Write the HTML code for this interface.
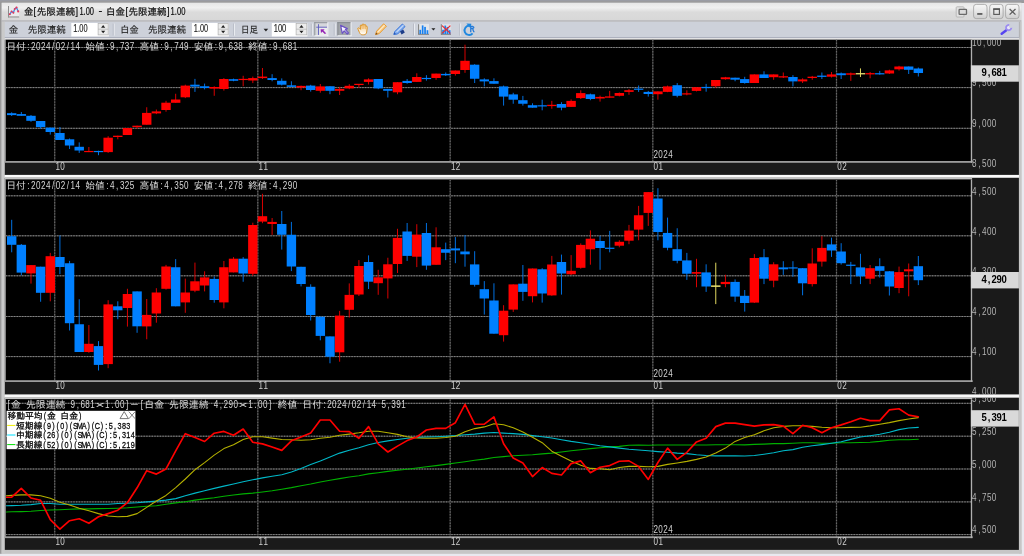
<!DOCTYPE html>
<html lang="ja"><head><meta charset="utf-8"><title>金[先限連続]1.00 - 白金[先限連続]1.00</title>
<style>html,body{margin:0;padding:0;background:#e9e9ef;overflow:hidden}body{width:1024px;height:556px}svg{will-change:transform;filter:blur(0.4px)}svg text{white-space:pre}</style></head>
<body>
<svg width="1024" height="556" viewBox="0 0 1024 556" style="display:block">
<defs>
<linearGradient id="tb" x1="0" y1="0" x2="0" y2="1"><stop offset="0" stop-color="#e6e6e6"/><stop offset="0.28" stop-color="#f0f0f0"/><stop offset="0.54" stop-color="#dbdbdb"/><stop offset="1" stop-color="#d8d8d8"/></linearGradient>
<linearGradient id="btn" x1="0" y1="0" x2="0" y2="1"><stop offset="0" stop-color="#f8f8f8"/><stop offset="0.5" stop-color="#e6e6e6"/><stop offset="1" stop-color="#cecece"/></linearGradient>
</defs>
<rect x="0.00" y="0.00" width="1024.00" height="556.00" fill="#e9e9ef"/>
<rect x="0.00" y="0.00" width="1024.00" height="1.30" fill="#9a9ca4"/>
<rect x="0.00" y="1.30" width="1024.00" height="1.50" fill="#858585"/>
<rect x="0.00" y="2.80" width="1.80" height="551.00" fill="#989898"/>
<rect x="1.80" y="2.80" width="1019.60" height="550.90" fill="#d2d2d2"/>
<rect x="1.80" y="2.80" width="1019.60" height="17.40" fill="url(#tb)"/>
<rect x="1.80" y="20.20" width="1019.60" height="1.60" fill="#b8b8bc"/>
<rect x="4.00" y="21.80" width="1015.00" height="15.20" fill="#cdd1da"/>
<rect x="4.00" y="37.00" width="1015.00" height="0.90" fill="#a2a8b6"/>
<rect x="4.00" y="37.90" width="1015.00" height="2.00" fill="#e2e2e4"/>
<rect x="1019.00" y="21.80" width="2.60" height="531.90" fill="#c6c6c6"/>
<rect x="1.80" y="549.80" width="1019.80" height="3.90" fill="#c6c6c6"/>
<rect x="1.80" y="21.80" width="3.00" height="531.90" fill="#cacaca"/>
<clipPath id="ax1"><rect x="971" y="39.8" width="48" height="135.2"/></clipPath>
<clipPath id="ax2"><rect x="971" y="177.8" width="48" height="216.8"/></clipPath>
<clipPath id="ax3"><rect x="971" y="397.7" width="48" height="152.2"/></clipPath>
<rect x="4.80" y="39.80" width="1014.10" height="135.20" fill="#1a1a1a"/>
<rect x="4.80" y="39.80" width="1.00" height="122.00" fill="#c0c0c0"/>
<rect x="5.80" y="39.80" width="965.70" height="122.00" fill="#000"/>
<g clip-path="url(#cp39)">
<clipPath id="cp39"><rect x="5.8" y="39.8" width="965.7" height="122.00000000000001"/></clipPath>
<line x1="5.80" y1="47.50" x2="971.50" y2="47.50" stroke="#464646" stroke-width="1.0"/>
<line x1="5.80" y1="47.50" x2="971.50" y2="47.50" stroke="#868686" stroke-width="1.0" stroke-dasharray="1.4 1.3"/>
<line x1="5.80" y1="87.60" x2="971.50" y2="87.60" stroke="#464646" stroke-width="1.0"/>
<line x1="5.80" y1="87.60" x2="971.50" y2="87.60" stroke="#868686" stroke-width="1.0" stroke-dasharray="1.4 1.3"/>
<line x1="5.80" y1="128.30" x2="971.50" y2="128.30" stroke="#464646" stroke-width="1.0"/>
<line x1="5.80" y1="128.30" x2="971.50" y2="128.30" stroke="#868686" stroke-width="1.0" stroke-dasharray="1.4 1.3"/>
<line x1="54.70" y1="39.80" x2="54.70" y2="161.80" stroke="#323232" stroke-width="1.2"/>
<line x1="54.70" y1="39.80" x2="54.70" y2="161.80" stroke="#666666" stroke-width="1.2" stroke-dasharray="1.4 1.4"/>
<line x1="257.80" y1="39.80" x2="257.80" y2="161.80" stroke="#323232" stroke-width="1.2"/>
<line x1="257.80" y1="39.80" x2="257.80" y2="161.80" stroke="#666666" stroke-width="1.2" stroke-dasharray="1.4 1.4"/>
<line x1="450.20" y1="39.80" x2="450.20" y2="161.80" stroke="#323232" stroke-width="1.2"/>
<line x1="450.20" y1="39.80" x2="450.20" y2="161.80" stroke="#666666" stroke-width="1.2" stroke-dasharray="1.4 1.4"/>
<line x1="652.80" y1="39.80" x2="652.80" y2="161.80" stroke="#323232" stroke-width="1.2"/>
<line x1="652.80" y1="39.80" x2="652.80" y2="161.80" stroke="#666666" stroke-width="1.2" stroke-dasharray="1.4 1.4"/>
<line x1="836.50" y1="39.80" x2="836.50" y2="161.80" stroke="#323232" stroke-width="1.2"/>
<line x1="836.50" y1="39.80" x2="836.50" y2="161.80" stroke="#666666" stroke-width="1.2" stroke-dasharray="1.4 1.4"/>
</g>
<line x1="11.70" y1="112.30" x2="11.70" y2="116.00" stroke="#0070e0" stroke-width="1.0"/>
<rect x="7.00" y="113.20" width="9.40" height="1.90" fill="#0080ff"/>
<line x1="21.34" y1="112.00" x2="21.34" y2="115.80" stroke="#0070e0" stroke-width="1.0"/>
<rect x="16.64" y="114.10" width="9.40" height="1.70" fill="#0080ff"/>
<line x1="30.99" y1="115.00" x2="30.99" y2="121.80" stroke="#0070e0" stroke-width="1.0"/>
<rect x="26.29" y="115.80" width="9.40" height="5.00" fill="#0080ff"/>
<line x1="40.63" y1="121.00" x2="40.63" y2="128.80" stroke="#0070e0" stroke-width="1.0"/>
<rect x="35.93" y="121.00" width="9.40" height="6.10" fill="#0080ff"/>
<line x1="50.28" y1="127.60" x2="50.28" y2="134.60" stroke="#0070e0" stroke-width="1.0"/>
<rect x="45.58" y="127.60" width="9.40" height="4.40" fill="#0080ff"/>
<line x1="59.92" y1="127.00" x2="59.92" y2="140.00" stroke="#0070e0" stroke-width="1.0"/>
<rect x="55.22" y="133.00" width="9.40" height="7.00" fill="#0080ff"/>
<line x1="69.57" y1="138.50" x2="69.57" y2="149.00" stroke="#0070e0" stroke-width="1.0"/>
<rect x="64.87" y="139.30" width="9.40" height="6.20" fill="#0080ff"/>
<line x1="79.22" y1="142.40" x2="79.22" y2="152.90" stroke="#0070e0" stroke-width="1.0"/>
<rect x="74.52" y="146.80" width="9.40" height="3.70" fill="#0080ff"/>
<line x1="88.86" y1="147.00" x2="88.86" y2="152.10" stroke="#d80000" stroke-width="1.0"/>
<rect x="84.16" y="150.95" width="9.40" height="1.20" fill="#ff0000"/>
<line x1="98.50" y1="150.70" x2="98.50" y2="155.20" stroke="#0070e0" stroke-width="1.0"/>
<rect x="93.80" y="150.95" width="9.40" height="1.20" fill="#0080ff"/>
<line x1="108.15" y1="136.20" x2="108.15" y2="152.90" stroke="#d80000" stroke-width="1.0"/>
<rect x="103.45" y="137.70" width="9.40" height="14.40" fill="#ff0000"/>
<line x1="117.80" y1="135.70" x2="117.80" y2="139.30" stroke="#d80000" stroke-width="1.0"/>
<rect x="113.09" y="135.70" width="9.40" height="1.30" fill="#ff0000"/>
<line x1="127.44" y1="128.00" x2="127.44" y2="135.00" stroke="#d80000" stroke-width="1.0"/>
<rect x="122.74" y="128.00" width="9.40" height="7.00" fill="#ff0000"/>
<line x1="137.08" y1="125.70" x2="137.08" y2="128.80" stroke="#d80000" stroke-width="1.0"/>
<rect x="132.38" y="125.70" width="9.40" height="1.40" fill="#ff0000"/>
<line x1="146.73" y1="107.25" x2="146.73" y2="124.75" stroke="#d80000" stroke-width="1.0"/>
<rect x="142.03" y="112.90" width="9.40" height="11.85" fill="#ff0000"/>
<line x1="156.37" y1="109.50" x2="156.37" y2="114.10" stroke="#d80000" stroke-width="1.0"/>
<rect x="151.67" y="111.40" width="9.40" height="2.00" fill="#ff0000"/>
<line x1="166.02" y1="100.80" x2="166.02" y2="111.70" stroke="#d80000" stroke-width="1.0"/>
<rect x="161.32" y="102.70" width="9.40" height="7.30" fill="#ff0000"/>
<line x1="175.66" y1="93.75" x2="175.66" y2="102.80" stroke="#d80000" stroke-width="1.0"/>
<rect x="170.97" y="99.50" width="9.40" height="3.30" fill="#ff0000"/>
<line x1="185.31" y1="84.70" x2="185.31" y2="98.10" stroke="#d80000" stroke-width="1.0"/>
<rect x="180.61" y="85.60" width="9.40" height="11.70" fill="#ff0000"/>
<line x1="194.95" y1="78.90" x2="194.95" y2="91.90" stroke="#0070e0" stroke-width="1.0"/>
<rect x="190.25" y="84.70" width="9.40" height="1.90" fill="#0080ff"/>
<line x1="204.60" y1="83.60" x2="204.60" y2="89.40" stroke="#0070e0" stroke-width="1.0"/>
<rect x="199.90" y="86.25" width="9.40" height="1.75" fill="#0080ff"/>
<line x1="214.24" y1="86.25" x2="214.24" y2="95.80" stroke="#d80000" stroke-width="1.0"/>
<rect x="209.54" y="87.00" width="9.40" height="1.60" fill="#ff0000"/>
<line x1="223.89" y1="78.10" x2="223.89" y2="90.60" stroke="#d80000" stroke-width="1.0"/>
<rect x="219.19" y="79.00" width="9.40" height="10.00" fill="#ff0000"/>
<line x1="233.53" y1="78.60" x2="233.53" y2="81.25" stroke="#0070e0" stroke-width="1.0"/>
<rect x="228.83" y="79.20" width="9.40" height="1.60" fill="#0080ff"/>
<line x1="243.18" y1="75.80" x2="243.18" y2="86.25" stroke="#d80000" stroke-width="1.0"/>
<rect x="238.48" y="78.85" width="9.40" height="1.20" fill="#ff0000"/>
<line x1="252.82" y1="76.60" x2="252.82" y2="83.10" stroke="#d80000" stroke-width="1.0"/>
<rect x="248.12" y="78.10" width="9.40" height="2.40" fill="#ff0000"/>
<line x1="262.47" y1="68.00" x2="262.47" y2="78.90" stroke="#d80000" stroke-width="1.0"/>
<rect x="257.77" y="76.60" width="9.40" height="1.50" fill="#ff0000"/>
<line x1="272.11" y1="74.20" x2="272.11" y2="81.25" stroke="#0070e0" stroke-width="1.0"/>
<rect x="267.41" y="78.10" width="9.40" height="1.90" fill="#0080ff"/>
<line x1="281.76" y1="78.40" x2="281.76" y2="85.50" stroke="#0070e0" stroke-width="1.0"/>
<rect x="277.06" y="80.80" width="9.40" height="3.90" fill="#0080ff"/>
<line x1="291.40" y1="81.25" x2="291.40" y2="86.90" stroke="#0070e0" stroke-width="1.0"/>
<rect x="286.70" y="85.30" width="9.40" height="1.60" fill="#0080ff"/>
<line x1="301.05" y1="85.60" x2="301.05" y2="90.20" stroke="#d80000" stroke-width="1.0"/>
<rect x="296.35" y="85.90" width="9.40" height="1.70" fill="#ff0000"/>
<line x1="310.69" y1="84.80" x2="310.69" y2="91.60" stroke="#0070e0" stroke-width="1.0"/>
<rect x="306.00" y="85.60" width="9.40" height="4.40" fill="#0080ff"/>
<line x1="320.34" y1="84.00" x2="320.34" y2="92.70" stroke="#d80000" stroke-width="1.0"/>
<rect x="315.64" y="86.40" width="9.40" height="4.40" fill="#ff0000"/>
<line x1="329.98" y1="86.25" x2="329.98" y2="94.20" stroke="#0070e0" stroke-width="1.0"/>
<rect x="325.28" y="86.25" width="9.40" height="4.55" fill="#0080ff"/>
<line x1="339.63" y1="86.90" x2="339.63" y2="95.00" stroke="#d80000" stroke-width="1.0"/>
<rect x="334.93" y="88.90" width="9.40" height="1.90" fill="#ff0000"/>
<line x1="349.27" y1="84.20" x2="349.27" y2="89.20" stroke="#d80000" stroke-width="1.0"/>
<rect x="344.57" y="85.80" width="9.40" height="2.60" fill="#ff0000"/>
<line x1="358.92" y1="84.00" x2="358.92" y2="87.70" stroke="#d80000" stroke-width="1.0"/>
<rect x="354.22" y="83.80" width="9.40" height="1.20" fill="#ff0000"/>
<line x1="368.56" y1="78.30" x2="368.56" y2="84.50" stroke="#d80000" stroke-width="1.0"/>
<rect x="363.87" y="79.40" width="9.40" height="2.50" fill="#ff0000"/>
<line x1="378.21" y1="79.00" x2="378.21" y2="89.20" stroke="#0070e0" stroke-width="1.0"/>
<rect x="373.51" y="79.00" width="9.40" height="9.40" fill="#0080ff"/>
<line x1="387.85" y1="88.90" x2="387.85" y2="97.50" stroke="#0070e0" stroke-width="1.0"/>
<rect x="383.15" y="88.90" width="9.40" height="1.90" fill="#0080ff"/>
<line x1="397.50" y1="82.20" x2="397.50" y2="94.20" stroke="#d80000" stroke-width="1.0"/>
<rect x="392.80" y="82.20" width="9.40" height="10.10" fill="#ff0000"/>
<line x1="407.14" y1="79.00" x2="407.14" y2="83.75" stroke="#0070e0" stroke-width="1.0"/>
<rect x="402.44" y="80.90" width="9.40" height="2.10" fill="#0080ff"/>
<line x1="416.79" y1="73.30" x2="416.79" y2="81.90" stroke="#d80000" stroke-width="1.0"/>
<rect x="412.09" y="77.00" width="9.40" height="4.90" fill="#ff0000"/>
<line x1="426.43" y1="75.20" x2="426.43" y2="80.60" stroke="#0070e0" stroke-width="1.0"/>
<rect x="421.73" y="77.90" width="9.40" height="1.20" fill="#0080ff"/>
<line x1="436.08" y1="73.60" x2="436.08" y2="79.80" stroke="#d80000" stroke-width="1.0"/>
<rect x="431.38" y="73.60" width="9.40" height="4.40" fill="#ff0000"/>
<line x1="445.72" y1="72.50" x2="445.72" y2="75.90" stroke="#0070e0" stroke-width="1.0"/>
<rect x="441.02" y="73.90" width="9.40" height="1.40" fill="#0080ff"/>
<line x1="455.37" y1="70.50" x2="455.37" y2="75.60" stroke="#d80000" stroke-width="1.0"/>
<rect x="450.67" y="70.50" width="9.40" height="3.50" fill="#ff0000"/>
<line x1="465.01" y1="44.70" x2="465.01" y2="72.80" stroke="#d80000" stroke-width="1.0"/>
<rect x="460.31" y="60.80" width="9.40" height="9.20" fill="#ff0000"/>
<line x1="474.66" y1="64.20" x2="474.66" y2="83.00" stroke="#0070e0" stroke-width="1.0"/>
<rect x="469.96" y="64.70" width="9.40" height="14.05" fill="#0080ff"/>
<line x1="484.30" y1="78.30" x2="484.30" y2="86.40" stroke="#0070e0" stroke-width="1.0"/>
<rect x="479.60" y="79.40" width="9.40" height="2.00" fill="#0080ff"/>
<line x1="493.95" y1="78.30" x2="493.95" y2="83.75" stroke="#0070e0" stroke-width="1.0"/>
<rect x="489.25" y="81.10" width="9.40" height="2.65" fill="#0080ff"/>
<line x1="503.59" y1="85.60" x2="503.59" y2="105.60" stroke="#0070e0" stroke-width="1.0"/>
<rect x="498.89" y="86.40" width="9.40" height="10.20" fill="#0080ff"/>
<line x1="513.24" y1="92.80" x2="513.24" y2="103.75" stroke="#0070e0" stroke-width="1.0"/>
<rect x="508.54" y="94.40" width="9.40" height="5.30" fill="#0080ff"/>
<line x1="522.88" y1="95.90" x2="522.88" y2="105.60" stroke="#0070e0" stroke-width="1.0"/>
<rect x="518.18" y="100.20" width="9.40" height="3.55" fill="#0080ff"/>
<line x1="532.53" y1="103.30" x2="532.53" y2="107.70" stroke="#0070e0" stroke-width="1.0"/>
<rect x="527.83" y="105.20" width="9.40" height="2.50" fill="#0080ff"/>
<line x1="542.18" y1="99.70" x2="542.18" y2="110.30" stroke="#0070e0" stroke-width="1.0"/>
<rect x="537.48" y="105.25" width="9.40" height="1.20" fill="#0080ff"/>
<line x1="551.82" y1="100.90" x2="551.82" y2="108.75" stroke="#d80000" stroke-width="1.0"/>
<rect x="547.12" y="104.80" width="9.40" height="1.30" fill="#ff0000"/>
<line x1="561.47" y1="102.20" x2="561.47" y2="110.30" stroke="#0070e0" stroke-width="1.0"/>
<rect x="556.76" y="104.00" width="9.40" height="3.70" fill="#0080ff"/>
<line x1="571.11" y1="99.40" x2="571.11" y2="106.90" stroke="#d80000" stroke-width="1.0"/>
<rect x="566.41" y="100.90" width="9.40" height="6.00" fill="#ff0000"/>
<line x1="580.75" y1="90.30" x2="580.75" y2="99.00" stroke="#d80000" stroke-width="1.0"/>
<rect x="576.05" y="93.10" width="9.40" height="5.00" fill="#ff0000"/>
<line x1="590.40" y1="93.60" x2="590.40" y2="100.20" stroke="#0070e0" stroke-width="1.0"/>
<rect x="585.70" y="94.30" width="9.40" height="4.70" fill="#0080ff"/>
<line x1="600.05" y1="95.60" x2="600.05" y2="101.60" stroke="#d80000" stroke-width="1.0"/>
<rect x="595.35" y="96.90" width="9.40" height="1.60" fill="#ff0000"/>
<line x1="609.69" y1="90.90" x2="609.69" y2="97.70" stroke="#d80000" stroke-width="1.0"/>
<rect x="604.99" y="96.40" width="9.40" height="1.30" fill="#ff0000"/>
<line x1="619.34" y1="92.50" x2="619.34" y2="96.40" stroke="#d80000" stroke-width="1.0"/>
<rect x="614.63" y="93.00" width="9.40" height="2.80" fill="#ff0000"/>
<line x1="628.98" y1="89.00" x2="628.98" y2="94.80" stroke="#d80000" stroke-width="1.0"/>
<rect x="624.28" y="90.20" width="9.40" height="1.70" fill="#ff0000"/>
<line x1="638.62" y1="85.50" x2="638.62" y2="91.90" stroke="#0070e0" stroke-width="1.0"/>
<rect x="633.92" y="88.60" width="9.40" height="1.20" fill="#0080ff"/>
<line x1="648.27" y1="90.90" x2="648.27" y2="96.60" stroke="#0070e0" stroke-width="1.0"/>
<rect x="643.57" y="91.90" width="9.40" height="2.10" fill="#0080ff"/>
<line x1="657.91" y1="91.40" x2="657.91" y2="99.70" stroke="#d80000" stroke-width="1.0"/>
<rect x="653.21" y="91.40" width="9.40" height="2.80" fill="#ff0000"/>
<line x1="667.56" y1="85.60" x2="667.56" y2="92.20" stroke="#d80000" stroke-width="1.0"/>
<rect x="662.86" y="86.40" width="9.40" height="5.50" fill="#ff0000"/>
<line x1="677.21" y1="83.10" x2="677.21" y2="97.30" stroke="#0070e0" stroke-width="1.0"/>
<rect x="672.50" y="85.20" width="9.40" height="10.60" fill="#0080ff"/>
<line x1="686.85" y1="90.30" x2="686.85" y2="95.30" stroke="#d80000" stroke-width="1.0"/>
<rect x="682.15" y="93.30" width="9.40" height="1.20" fill="#ff0000"/>
<line x1="696.50" y1="87.20" x2="696.50" y2="91.40" stroke="#d80000" stroke-width="1.0"/>
<rect x="691.79" y="87.20" width="9.40" height="3.70" fill="#ff0000"/>
<line x1="706.14" y1="83.90" x2="706.14" y2="91.70" stroke="#0070e0" stroke-width="1.0"/>
<rect x="701.44" y="86.90" width="9.40" height="1.20" fill="#0080ff"/>
<line x1="715.78" y1="80.00" x2="715.78" y2="87.80" stroke="#d80000" stroke-width="1.0"/>
<rect x="711.08" y="80.00" width="9.40" height="6.25" fill="#ff0000"/>
<line x1="725.43" y1="76.90" x2="725.43" y2="79.70" stroke="#d80000" stroke-width="1.0"/>
<rect x="720.73" y="77.30" width="9.40" height="1.90" fill="#ff0000"/>
<line x1="735.08" y1="77.70" x2="735.08" y2="81.25" stroke="#0070e0" stroke-width="1.0"/>
<rect x="730.38" y="77.70" width="9.40" height="2.00" fill="#0080ff"/>
<line x1="744.72" y1="76.80" x2="744.72" y2="83.70" stroke="#0070e0" stroke-width="1.0"/>
<rect x="740.02" y="79.10" width="9.40" height="3.90" fill="#0080ff"/>
<line x1="754.37" y1="74.40" x2="754.37" y2="83.00" stroke="#d80000" stroke-width="1.0"/>
<rect x="749.66" y="74.40" width="9.40" height="8.60" fill="#ff0000"/>
<line x1="764.01" y1="71.25" x2="764.01" y2="78.00" stroke="#0070e0" stroke-width="1.0"/>
<rect x="759.31" y="74.40" width="9.40" height="3.60" fill="#0080ff"/>
<line x1="773.65" y1="74.40" x2="773.65" y2="79.80" stroke="#d80000" stroke-width="1.0"/>
<rect x="768.95" y="74.40" width="9.40" height="2.80" fill="#ff0000"/>
<line x1="783.30" y1="72.50" x2="783.30" y2="78.00" stroke="#d80000" stroke-width="1.0"/>
<rect x="778.60" y="76.25" width="9.40" height="1.25" fill="#ff0000"/>
<line x1="792.95" y1="75.20" x2="792.95" y2="86.40" stroke="#0070e0" stroke-width="1.0"/>
<rect x="788.25" y="77.00" width="9.40" height="4.40" fill="#0080ff"/>
<line x1="802.59" y1="78.30" x2="802.59" y2="83.00" stroke="#d80000" stroke-width="1.0"/>
<rect x="797.89" y="79.40" width="9.40" height="2.00" fill="#ff0000"/>
<line x1="812.24" y1="75.90" x2="812.24" y2="79.80" stroke="#d80000" stroke-width="1.0"/>
<rect x="807.53" y="76.70" width="9.40" height="1.30" fill="#ff0000"/>
<line x1="821.88" y1="72.50" x2="821.88" y2="79.00" stroke="#0070e0" stroke-width="1.0"/>
<rect x="817.18" y="75.60" width="9.40" height="1.30" fill="#0080ff"/>
<line x1="831.52" y1="72.00" x2="831.52" y2="77.50" stroke="#d80000" stroke-width="1.0"/>
<rect x="826.82" y="74.40" width="9.40" height="2.30" fill="#ff0000"/>
<line x1="841.17" y1="72.50" x2="841.17" y2="79.00" stroke="#0070e0" stroke-width="1.0"/>
<rect x="836.47" y="73.30" width="9.40" height="1.90" fill="#0080ff"/>
<line x1="850.82" y1="72.50" x2="850.82" y2="80.90" stroke="#d80000" stroke-width="1.0"/>
<rect x="846.12" y="73.30" width="9.40" height="1.40" fill="#ff0000"/>
<line x1="860.46" y1="68.40" x2="860.46" y2="77.00" stroke="#e0d860" stroke-width="1.0"/>
<rect x="855.76" y="73.10" width="9.40" height="1.30" fill="#e8e070"/>
<line x1="870.11" y1="72.00" x2="870.11" y2="78.30" stroke="#d80000" stroke-width="1.0"/>
<rect x="865.40" y="73.10" width="9.40" height="1.30" fill="#ff0000"/>
<line x1="879.75" y1="70.90" x2="879.75" y2="74.70" stroke="#0070e0" stroke-width="1.0"/>
<rect x="875.05" y="73.20" width="9.40" height="1.20" fill="#0080ff"/>
<line x1="889.39" y1="69.70" x2="889.39" y2="74.00" stroke="#d80000" stroke-width="1.0"/>
<rect x="884.69" y="70.40" width="9.40" height="3.10" fill="#ff0000"/>
<line x1="899.04" y1="65.80" x2="899.04" y2="70.60" stroke="#d80000" stroke-width="1.0"/>
<rect x="894.34" y="66.50" width="9.40" height="2.80" fill="#ff0000"/>
<line x1="908.69" y1="66.50" x2="908.69" y2="74.00" stroke="#0070e0" stroke-width="1.0"/>
<rect x="903.99" y="66.50" width="9.40" height="3.30" fill="#0080ff"/>
<line x1="918.33" y1="67.50" x2="918.33" y2="76.50" stroke="#0070e0" stroke-width="1.0"/>
<rect x="913.63" y="68.50" width="9.40" height="4.50" fill="#0080ff"/>
<text x="6.20" y="49.70" font-family="'Liberation Mono','IPAGothic',monospace" font-size="9.87" fill="#d8d8d8" textLength="19.74" lengthAdjust="spacingAndGlyphs">日付</text>
<text transform="scale(0.8,1)" x="35.51 41.68 47.85 54.02 60.18 66.35 72.52 78.69 84.86 91.03 97.20 103.37" y="49.70" text-anchor="middle" font-family="'Liberation Sans','IPAGothic',sans-serif" font-size="10.14" fill="#d8d8d8">:2024/02/14 </text>
<text x="85.16" y="49.70" font-family="'Liberation Mono','IPAGothic',monospace" font-size="9.87" fill="#d8d8d8" textLength="19.74" lengthAdjust="spacingAndGlyphs">始値</text>
<text transform="scale(0.8,1)" x="134.21 140.38 146.55 152.72 158.88 165.05 171.22" y="49.70" text-anchor="middle" font-family="'Liberation Sans','IPAGothic',sans-serif" font-size="10.14" fill="#d8d8d8">:9,737 </text>
<text x="139.44" y="49.70" font-family="'Liberation Mono','IPAGothic',monospace" font-size="9.87" fill="#d8d8d8" textLength="19.74" lengthAdjust="spacingAndGlyphs">高値</text>
<text transform="scale(0.8,1)" x="202.07 208.23 214.40 220.57 226.74 232.91 239.08" y="49.70" text-anchor="middle" font-family="'Liberation Sans','IPAGothic',sans-serif" font-size="10.14" fill="#d8d8d8">:9,749 </text>
<text x="193.73" y="49.70" font-family="'Liberation Mono','IPAGothic',monospace" font-size="9.87" fill="#d8d8d8" textLength="19.74" lengthAdjust="spacingAndGlyphs">安値</text>
<text transform="scale(0.8,1)" x="269.92 276.09 282.26 288.43 294.60 300.77 306.93" y="49.70" text-anchor="middle" font-family="'Liberation Sans','IPAGothic',sans-serif" font-size="10.14" fill="#d8d8d8">:9,638 </text>
<text x="248.01" y="49.70" font-family="'Liberation Mono','IPAGothic',monospace" font-size="9.87" fill="#d8d8d8" textLength="19.74" lengthAdjust="spacingAndGlyphs">終値</text>
<text transform="scale(0.8,1)" x="337.78 343.95 350.12 356.28 362.45 368.62" y="49.70" text-anchor="middle" font-family="'Liberation Sans','IPAGothic',sans-serif" font-size="10.14" fill="#d8d8d8">:9,681</text>
<rect x="4.80" y="161.00" width="967.90" height="1.80" fill="#9c9c9c"/>
<rect x="970.80" y="39.80" width="1.35" height="123.00" fill="#b0b0b0"/>
<text transform="scale(0.8,1)" x="72.08 78.25" y="170.00" text-anchor="middle" font-family="'Liberation Sans','IPAGothic',sans-serif" font-size="10.14" fill="#d0d0d0">10</text>
<text transform="scale(0.8,1)" x="325.96 332.13" y="170.00" text-anchor="middle" font-family="'Liberation Sans','IPAGothic',sans-serif" font-size="10.14" fill="#d0d0d0">11</text>
<text transform="scale(0.8,1)" x="566.46 572.63" y="170.00" text-anchor="middle" font-family="'Liberation Sans','IPAGothic',sans-serif" font-size="10.14" fill="#d0d0d0">12</text>
<text transform="scale(0.8,1)" x="819.71 825.88" y="170.00" text-anchor="middle" font-family="'Liberation Sans','IPAGothic',sans-serif" font-size="10.14" fill="#d0d0d0">01</text>
<text transform="scale(0.8,1)" x="1049.33 1055.50" y="170.00" text-anchor="middle" font-family="'Liberation Sans','IPAGothic',sans-serif" font-size="10.14" fill="#d0d0d0">02</text>
<text transform="scale(0.8,1)" x="819.58 825.75 831.92 838.09" y="157.90" text-anchor="middle" font-family="'Liberation Sans','IPAGothic',sans-serif" font-size="10.14" fill="#d0d0d0">2024</text>
<g clip-path="url(#ax1)">
<text transform="scale(0.8,1)" x="1217.96 1224.13 1230.30 1236.47 1242.63 1248.80" y="46.20" text-anchor="middle" font-family="'Liberation Sans','IPAGothic',sans-serif" font-size="10.14" fill="#b4b4b4">10,000</text>
<text transform="scale(0.8,1)" x="1217.96 1224.13 1230.30 1236.47 1242.63" y="86.50" text-anchor="middle" font-family="'Liberation Sans','IPAGothic',sans-serif" font-size="10.14" fill="#b4b4b4">9,500</text>
<text transform="scale(0.8,1)" x="1217.96 1224.13 1230.30 1236.47 1242.63" y="126.90" text-anchor="middle" font-family="'Liberation Sans','IPAGothic',sans-serif" font-size="10.14" fill="#b4b4b4">9,000</text>
<text transform="scale(0.8,1)" x="1217.96 1224.13 1230.30 1236.47 1242.63" y="167.20" text-anchor="middle" font-family="'Liberation Sans','IPAGothic',sans-serif" font-size="10.14" fill="#b4b4b4">8,500</text>
</g>
<rect x="970.90" y="65.30" width="48.00" height="16.40" fill="#d9d9d9"/>
<text transform="scale(0.88,1)" x="1118.39 1124.05 1129.70 1135.36 1141.01" y="76.10" text-anchor="middle" font-family="'Liberation Sans','IPAGothic',sans-serif" font-size="10.83" fill="#000" font-weight="bold">9,681</text>
<rect x="4.80" y="174.90" width="1014.20" height="2.90" fill="#fbfbfb"/>
<rect x="4.80" y="177.80" width="1014.10" height="216.80" fill="#1a1a1a"/>
<rect x="4.80" y="177.35" width="967.30" height="2.25" fill="#c4c4c4"/>
<rect x="4.80" y="179.60" width="1.00" height="201.40" fill="#c0c0c0"/>
<rect x="5.80" y="179.60" width="965.70" height="201.40" fill="#000"/>
<g clip-path="url(#cp177)">
<clipPath id="cp177"><rect x="5.8" y="179.6" width="965.7" height="201.4"/></clipPath>
<line x1="5.80" y1="195.80" x2="971.50" y2="195.80" stroke="#464646" stroke-width="1.0"/>
<line x1="5.80" y1="195.80" x2="971.50" y2="195.80" stroke="#868686" stroke-width="1.0" stroke-dasharray="1.4 1.3"/>
<line x1="5.80" y1="235.80" x2="971.50" y2="235.80" stroke="#464646" stroke-width="1.0"/>
<line x1="5.80" y1="235.80" x2="971.50" y2="235.80" stroke="#868686" stroke-width="1.0" stroke-dasharray="1.4 1.3"/>
<line x1="5.80" y1="275.80" x2="971.50" y2="275.80" stroke="#464646" stroke-width="1.0"/>
<line x1="5.80" y1="275.80" x2="971.50" y2="275.80" stroke="#868686" stroke-width="1.0" stroke-dasharray="1.4 1.3"/>
<line x1="5.80" y1="316.50" x2="971.50" y2="316.50" stroke="#464646" stroke-width="1.0"/>
<line x1="5.80" y1="316.50" x2="971.50" y2="316.50" stroke="#868686" stroke-width="1.0" stroke-dasharray="1.4 1.3"/>
<line x1="5.80" y1="356.60" x2="971.50" y2="356.60" stroke="#464646" stroke-width="1.0"/>
<line x1="5.80" y1="356.60" x2="971.50" y2="356.60" stroke="#868686" stroke-width="1.0" stroke-dasharray="1.4 1.3"/>
<line x1="54.70" y1="179.60" x2="54.70" y2="381.00" stroke="#323232" stroke-width="1.2"/>
<line x1="54.70" y1="179.60" x2="54.70" y2="381.00" stroke="#666666" stroke-width="1.2" stroke-dasharray="1.4 1.4"/>
<line x1="257.80" y1="179.60" x2="257.80" y2="381.00" stroke="#323232" stroke-width="1.2"/>
<line x1="257.80" y1="179.60" x2="257.80" y2="381.00" stroke="#666666" stroke-width="1.2" stroke-dasharray="1.4 1.4"/>
<line x1="450.20" y1="179.60" x2="450.20" y2="381.00" stroke="#323232" stroke-width="1.2"/>
<line x1="450.20" y1="179.60" x2="450.20" y2="381.00" stroke="#666666" stroke-width="1.2" stroke-dasharray="1.4 1.4"/>
<line x1="652.80" y1="179.60" x2="652.80" y2="381.00" stroke="#323232" stroke-width="1.2"/>
<line x1="652.80" y1="179.60" x2="652.80" y2="381.00" stroke="#666666" stroke-width="1.2" stroke-dasharray="1.4 1.4"/>
<line x1="836.50" y1="179.60" x2="836.50" y2="381.00" stroke="#323232" stroke-width="1.2"/>
<line x1="836.50" y1="179.60" x2="836.50" y2="381.00" stroke="#666666" stroke-width="1.2" stroke-dasharray="1.4 1.4"/>
</g>
<line x1="11.70" y1="219.80" x2="11.70" y2="252.30" stroke="#0070e0" stroke-width="1.0"/>
<rect x="7.00" y="236.20" width="9.40" height="8.60" fill="#0080ff"/>
<line x1="21.34" y1="244.00" x2="21.34" y2="275.30" stroke="#0070e0" stroke-width="1.0"/>
<rect x="16.64" y="244.80" width="9.40" height="27.80" fill="#0080ff"/>
<line x1="30.99" y1="265.10" x2="30.99" y2="283.60" stroke="#d80000" stroke-width="1.0"/>
<rect x="26.29" y="265.10" width="9.40" height="8.30" fill="#ff0000"/>
<line x1="40.63" y1="266.70" x2="40.63" y2="301.75" stroke="#0070e0" stroke-width="1.0"/>
<rect x="35.93" y="266.70" width="9.40" height="26.10" fill="#0080ff"/>
<line x1="50.28" y1="252.90" x2="50.28" y2="301.30" stroke="#d80000" stroke-width="1.0"/>
<rect x="45.58" y="256.20" width="9.40" height="36.60" fill="#ff0000"/>
<line x1="59.92" y1="235.40" x2="59.92" y2="274.20" stroke="#0070e0" stroke-width="1.0"/>
<rect x="55.22" y="257.00" width="9.40" height="10.00" fill="#0080ff"/>
<line x1="69.57" y1="260.90" x2="69.57" y2="330.50" stroke="#0070e0" stroke-width="1.0"/>
<rect x="64.87" y="263.25" width="9.40" height="59.95" fill="#0080ff"/>
<line x1="79.22" y1="299.25" x2="79.22" y2="352.00" stroke="#0070e0" stroke-width="1.0"/>
<rect x="74.52" y="324.25" width="9.40" height="27.75" fill="#0080ff"/>
<line x1="88.86" y1="325.00" x2="88.86" y2="352.80" stroke="#d80000" stroke-width="1.0"/>
<rect x="84.16" y="343.80" width="9.40" height="8.20" fill="#ff0000"/>
<line x1="98.50" y1="341.10" x2="98.50" y2="370.50" stroke="#0070e0" stroke-width="1.0"/>
<rect x="93.80" y="346.10" width="9.40" height="18.80" fill="#0080ff"/>
<line x1="108.15" y1="300.20" x2="108.15" y2="368.20" stroke="#d80000" stroke-width="1.0"/>
<rect x="103.45" y="304.40" width="9.40" height="59.70" fill="#ff0000"/>
<line x1="117.80" y1="301.30" x2="117.80" y2="319.25" stroke="#0070e0" stroke-width="1.0"/>
<rect x="113.09" y="306.30" width="9.40" height="4.00" fill="#0080ff"/>
<line x1="127.44" y1="288.80" x2="127.44" y2="326.60" stroke="#d80000" stroke-width="1.0"/>
<rect x="122.74" y="294.00" width="9.40" height="14.00" fill="#ff0000"/>
<line x1="137.08" y1="291.40" x2="137.08" y2="332.80" stroke="#0070e0" stroke-width="1.0"/>
<rect x="132.38" y="291.40" width="9.40" height="34.90" fill="#0080ff"/>
<line x1="146.73" y1="299.00" x2="146.73" y2="339.25" stroke="#d80000" stroke-width="1.0"/>
<rect x="142.03" y="314.90" width="9.40" height="11.50" fill="#ff0000"/>
<line x1="156.37" y1="288.20" x2="156.37" y2="322.70" stroke="#d80000" stroke-width="1.0"/>
<rect x="151.67" y="292.50" width="9.40" height="21.00" fill="#ff0000"/>
<line x1="166.02" y1="264.90" x2="166.02" y2="289.60" stroke="#d80000" stroke-width="1.0"/>
<rect x="161.32" y="266.50" width="9.40" height="22.30" fill="#ff0000"/>
<line x1="175.66" y1="259.10" x2="175.66" y2="306.30" stroke="#0070e0" stroke-width="1.0"/>
<rect x="170.97" y="267.25" width="9.40" height="39.05" fill="#0080ff"/>
<line x1="185.31" y1="278.60" x2="185.31" y2="312.80" stroke="#d80000" stroke-width="1.0"/>
<rect x="180.61" y="292.50" width="9.40" height="9.90" fill="#ff0000"/>
<line x1="194.95" y1="262.60" x2="194.95" y2="292.20" stroke="#d80000" stroke-width="1.0"/>
<rect x="190.25" y="281.30" width="9.40" height="9.40" fill="#ff0000"/>
<line x1="204.60" y1="271.30" x2="204.60" y2="291.40" stroke="#d80000" stroke-width="1.0"/>
<rect x="199.90" y="277.40" width="9.40" height="8.10" fill="#ff0000"/>
<line x1="214.24" y1="276.60" x2="214.24" y2="302.70" stroke="#0070e0" stroke-width="1.0"/>
<rect x="209.54" y="278.90" width="9.40" height="21.10" fill="#0080ff"/>
<line x1="223.89" y1="261.00" x2="223.89" y2="308.30" stroke="#d80000" stroke-width="1.0"/>
<rect x="219.19" y="267.25" width="9.40" height="35.15" fill="#ff0000"/>
<line x1="233.53" y1="257.10" x2="233.53" y2="272.40" stroke="#d80000" stroke-width="1.0"/>
<rect x="228.83" y="258.70" width="9.40" height="13.70" fill="#ff0000"/>
<line x1="243.18" y1="257.10" x2="243.18" y2="281.75" stroke="#0070e0" stroke-width="1.0"/>
<rect x="238.48" y="258.70" width="9.40" height="14.80" fill="#0080ff"/>
<line x1="252.82" y1="222.70" x2="252.82" y2="275.80" stroke="#d80000" stroke-width="1.0"/>
<rect x="248.12" y="225.00" width="9.40" height="48.80" fill="#ff0000"/>
<line x1="262.47" y1="193.80" x2="262.47" y2="223.20" stroke="#d80000" stroke-width="1.0"/>
<rect x="257.77" y="216.20" width="9.40" height="5.40" fill="#ff0000"/>
<line x1="272.11" y1="218.00" x2="272.11" y2="234.90" stroke="#d80000" stroke-width="1.0"/>
<rect x="267.41" y="221.90" width="9.40" height="2.10" fill="#ff0000"/>
<line x1="281.76" y1="211.00" x2="281.76" y2="249.60" stroke="#0070e0" stroke-width="1.0"/>
<rect x="277.06" y="224.00" width="9.40" height="10.75" fill="#0080ff"/>
<line x1="291.40" y1="221.90" x2="291.40" y2="271.10" stroke="#0070e0" stroke-width="1.0"/>
<rect x="286.70" y="234.75" width="9.40" height="31.75" fill="#0080ff"/>
<line x1="301.05" y1="266.80" x2="301.05" y2="286.40" stroke="#0070e0" stroke-width="1.0"/>
<rect x="296.35" y="266.80" width="9.40" height="17.20" fill="#0080ff"/>
<line x1="310.69" y1="284.30" x2="310.69" y2="320.50" stroke="#0070e0" stroke-width="1.0"/>
<rect x="306.00" y="286.80" width="9.40" height="28.20" fill="#0080ff"/>
<line x1="320.34" y1="316.70" x2="320.34" y2="340.30" stroke="#0070e0" stroke-width="1.0"/>
<rect x="315.64" y="316.70" width="9.40" height="19.20" fill="#0080ff"/>
<line x1="329.98" y1="336.40" x2="329.98" y2="363.25" stroke="#0070e0" stroke-width="1.0"/>
<rect x="325.28" y="336.40" width="9.40" height="20.30" fill="#0080ff"/>
<line x1="339.63" y1="310.90" x2="339.63" y2="361.70" stroke="#d80000" stroke-width="1.0"/>
<rect x="334.93" y="315.60" width="9.40" height="36.70" fill="#ff0000"/>
<line x1="349.27" y1="283.40" x2="349.27" y2="317.60" stroke="#d80000" stroke-width="1.0"/>
<rect x="344.57" y="294.90" width="9.40" height="14.90" fill="#ff0000"/>
<line x1="358.92" y1="260.10" x2="358.92" y2="296.00" stroke="#d80000" stroke-width="1.0"/>
<rect x="354.22" y="266.00" width="9.40" height="28.50" fill="#ff0000"/>
<line x1="368.56" y1="255.40" x2="368.56" y2="289.00" stroke="#0070e0" stroke-width="1.0"/>
<rect x="363.87" y="262.00" width="9.40" height="19.70" fill="#0080ff"/>
<line x1="378.21" y1="269.80" x2="378.21" y2="294.80" stroke="#d80000" stroke-width="1.0"/>
<rect x="373.51" y="277.30" width="9.40" height="5.90" fill="#ff0000"/>
<line x1="387.85" y1="257.75" x2="387.85" y2="298.50" stroke="#d80000" stroke-width="1.0"/>
<rect x="383.15" y="264.30" width="9.40" height="14.10" fill="#ff0000"/>
<line x1="397.50" y1="228.80" x2="397.50" y2="273.00" stroke="#d80000" stroke-width="1.0"/>
<rect x="392.80" y="237.90" width="9.40" height="26.10" fill="#ff0000"/>
<line x1="407.14" y1="223.00" x2="407.14" y2="260.90" stroke="#0070e0" stroke-width="1.0"/>
<rect x="402.44" y="231.50" width="9.40" height="24.40" fill="#0080ff"/>
<line x1="416.79" y1="224.20" x2="416.79" y2="267.10" stroke="#d80000" stroke-width="1.0"/>
<rect x="412.09" y="234.60" width="9.40" height="22.10" fill="#ff0000"/>
<line x1="426.43" y1="223.00" x2="426.43" y2="269.80" stroke="#0070e0" stroke-width="1.0"/>
<rect x="421.73" y="233.00" width="9.40" height="32.60" fill="#0080ff"/>
<line x1="436.08" y1="227.30" x2="436.08" y2="264.80" stroke="#d80000" stroke-width="1.0"/>
<rect x="431.38" y="247.30" width="9.40" height="17.50" fill="#ff0000"/>
<line x1="445.72" y1="242.60" x2="445.72" y2="260.10" stroke="#0070e0" stroke-width="1.0"/>
<rect x="441.02" y="249.20" width="9.40" height="3.55" fill="#0080ff"/>
<line x1="455.37" y1="237.10" x2="455.37" y2="263.20" stroke="#0070e0" stroke-width="1.0"/>
<rect x="450.67" y="248.40" width="9.40" height="2.00" fill="#0080ff"/>
<line x1="465.01" y1="235.10" x2="465.01" y2="266.70" stroke="#0070e0" stroke-width="1.0"/>
<rect x="460.31" y="251.50" width="9.40" height="2.80" fill="#0080ff"/>
<line x1="474.66" y1="251.20" x2="474.66" y2="286.60" stroke="#0070e0" stroke-width="1.0"/>
<rect x="469.96" y="264.40" width="9.40" height="20.40" fill="#0080ff"/>
<line x1="484.30" y1="281.10" x2="484.30" y2="314.60" stroke="#0070e0" stroke-width="1.0"/>
<rect x="479.60" y="289.20" width="9.40" height="9.30" fill="#0080ff"/>
<line x1="493.95" y1="283.30" x2="493.95" y2="333.70" stroke="#0070e0" stroke-width="1.0"/>
<rect x="489.25" y="300.50" width="9.40" height="33.20" fill="#0080ff"/>
<line x1="503.59" y1="305.20" x2="503.59" y2="341.60" stroke="#d80000" stroke-width="1.0"/>
<rect x="498.89" y="310.70" width="9.40" height="24.50" fill="#ff0000"/>
<line x1="513.24" y1="284.40" x2="513.24" y2="311.90" stroke="#d80000" stroke-width="1.0"/>
<rect x="508.54" y="284.40" width="9.40" height="25.20" fill="#ff0000"/>
<line x1="522.88" y1="265.00" x2="522.88" y2="300.80" stroke="#0070e0" stroke-width="1.0"/>
<rect x="518.18" y="283.70" width="9.40" height="8.20" fill="#0080ff"/>
<line x1="532.53" y1="268.50" x2="532.53" y2="302.40" stroke="#d80000" stroke-width="1.0"/>
<rect x="527.83" y="268.50" width="9.40" height="27.70" fill="#ff0000"/>
<line x1="542.18" y1="268.20" x2="542.18" y2="302.60" stroke="#0070e0" stroke-width="1.0"/>
<rect x="537.48" y="269.30" width="9.40" height="24.20" fill="#0080ff"/>
<line x1="551.82" y1="255.90" x2="551.82" y2="295.80" stroke="#d80000" stroke-width="1.0"/>
<rect x="547.12" y="264.50" width="9.40" height="30.90" fill="#ff0000"/>
<line x1="561.47" y1="254.60" x2="561.47" y2="294.60" stroke="#0070e0" stroke-width="1.0"/>
<rect x="556.76" y="262.00" width="9.40" height="11.50" fill="#0080ff"/>
<line x1="571.11" y1="255.10" x2="571.11" y2="275.00" stroke="#d80000" stroke-width="1.0"/>
<rect x="566.41" y="270.80" width="9.40" height="3.50" fill="#ff0000"/>
<line x1="580.75" y1="243.40" x2="580.75" y2="268.70" stroke="#d80000" stroke-width="1.0"/>
<rect x="576.05" y="244.90" width="9.40" height="22.90" fill="#ff0000"/>
<line x1="590.40" y1="230.40" x2="590.40" y2="264.70" stroke="#d80000" stroke-width="1.0"/>
<rect x="585.70" y="238.70" width="9.40" height="10.60" fill="#ff0000"/>
<line x1="600.05" y1="235.90" x2="600.05" y2="269.80" stroke="#0070e0" stroke-width="1.0"/>
<rect x="595.35" y="241.00" width="9.40" height="7.00" fill="#0080ff"/>
<line x1="609.69" y1="230.90" x2="609.69" y2="252.30" stroke="#0070e0" stroke-width="1.0"/>
<rect x="604.99" y="247.68" width="9.40" height="1.20" fill="#0080ff"/>
<line x1="619.34" y1="240.25" x2="619.34" y2="247.30" stroke="#d80000" stroke-width="1.0"/>
<rect x="614.63" y="241.80" width="9.40" height="3.90" fill="#ff0000"/>
<line x1="628.98" y1="224.90" x2="628.98" y2="244.20" stroke="#d80000" stroke-width="1.0"/>
<rect x="624.28" y="230.60" width="9.40" height="10.10" fill="#ff0000"/>
<line x1="638.62" y1="205.90" x2="638.62" y2="240.25" stroke="#d80000" stroke-width="1.0"/>
<rect x="633.92" y="215.25" width="9.40" height="14.35" fill="#ff0000"/>
<line x1="648.27" y1="192.10" x2="648.27" y2="225.90" stroke="#d80000" stroke-width="1.0"/>
<rect x="643.57" y="192.10" width="9.40" height="20.80" fill="#ff0000"/>
<line x1="657.91" y1="188.20" x2="657.91" y2="240.25" stroke="#0070e0" stroke-width="1.0"/>
<rect x="653.21" y="198.50" width="9.40" height="33.50" fill="#0080ff"/>
<line x1="667.56" y1="217.60" x2="667.56" y2="250.30" stroke="#0070e0" stroke-width="1.0"/>
<rect x="662.86" y="232.95" width="9.40" height="14.85" fill="#0080ff"/>
<line x1="677.21" y1="228.25" x2="677.21" y2="263.30" stroke="#0070e0" stroke-width="1.0"/>
<rect x="672.50" y="249.20" width="9.40" height="11.60" fill="#0080ff"/>
<line x1="686.85" y1="252.90" x2="686.85" y2="279.90" stroke="#0070e0" stroke-width="1.0"/>
<rect x="682.15" y="260.40" width="9.40" height="13.30" fill="#0080ff"/>
<line x1="696.50" y1="258.80" x2="696.50" y2="287.25" stroke="#d80000" stroke-width="1.0"/>
<rect x="691.79" y="272.10" width="9.40" height="1.60" fill="#ff0000"/>
<line x1="706.14" y1="264.30" x2="706.14" y2="291.90" stroke="#0070e0" stroke-width="1.0"/>
<rect x="701.44" y="272.40" width="9.40" height="14.10" fill="#0080ff"/>
<line x1="715.78" y1="262.70" x2="715.78" y2="304.10" stroke="#e0d860" stroke-width="1.0"/>
<rect x="711.08" y="285.40" width="9.40" height="1.50" fill="#e8e070"/>
<line x1="725.43" y1="274.75" x2="725.43" y2="287.25" stroke="#d80000" stroke-width="1.0"/>
<rect x="720.73" y="281.90" width="9.40" height="2.20" fill="#ff0000"/>
<line x1="735.08" y1="279.40" x2="735.08" y2="301.80" stroke="#0070e0" stroke-width="1.0"/>
<rect x="730.38" y="281.90" width="9.40" height="14.70" fill="#0080ff"/>
<line x1="744.72" y1="290.00" x2="744.72" y2="311.60" stroke="#0070e0" stroke-width="1.0"/>
<rect x="740.02" y="295.80" width="9.40" height="7.20" fill="#0080ff"/>
<line x1="754.37" y1="254.10" x2="754.37" y2="303.00" stroke="#d80000" stroke-width="1.0"/>
<rect x="749.66" y="258.00" width="9.40" height="44.60" fill="#ff0000"/>
<line x1="764.01" y1="249.10" x2="764.01" y2="284.10" stroke="#0070e0" stroke-width="1.0"/>
<rect x="759.31" y="257.25" width="9.40" height="21.45" fill="#0080ff"/>
<line x1="773.65" y1="262.25" x2="773.65" y2="287.25" stroke="#d80000" stroke-width="1.0"/>
<rect x="768.95" y="264.30" width="9.40" height="16.40" fill="#ff0000"/>
<line x1="783.30" y1="261.20" x2="783.30" y2="274.90" stroke="#0070e0" stroke-width="1.0"/>
<rect x="778.60" y="267.40" width="9.40" height="1.90" fill="#0080ff"/>
<line x1="792.95" y1="261.20" x2="792.95" y2="276.80" stroke="#0070e0" stroke-width="1.0"/>
<rect x="788.25" y="267.35" width="9.40" height="1.20" fill="#0080ff"/>
<line x1="802.59" y1="268.20" x2="802.59" y2="295.30" stroke="#0070e0" stroke-width="1.0"/>
<rect x="797.89" y="268.20" width="9.40" height="15.10" fill="#0080ff"/>
<line x1="812.24" y1="248.30" x2="812.24" y2="286.50" stroke="#d80000" stroke-width="1.0"/>
<rect x="807.53" y="263.50" width="9.40" height="20.60" fill="#ff0000"/>
<line x1="821.88" y1="236.20" x2="821.88" y2="266.60" stroke="#d80000" stroke-width="1.0"/>
<rect x="817.18" y="247.90" width="9.40" height="13.70" fill="#ff0000"/>
<line x1="831.52" y1="237.70" x2="831.52" y2="256.90" stroke="#0070e0" stroke-width="1.0"/>
<rect x="826.82" y="244.40" width="9.40" height="6.10" fill="#0080ff"/>
<line x1="841.17" y1="243.20" x2="841.17" y2="264.60" stroke="#0070e0" stroke-width="1.0"/>
<rect x="836.47" y="251.50" width="9.40" height="11.70" fill="#0080ff"/>
<line x1="850.82" y1="261.90" x2="850.82" y2="284.10" stroke="#0070e0" stroke-width="1.0"/>
<rect x="846.12" y="264.67" width="9.40" height="1.20" fill="#0080ff"/>
<line x1="860.46" y1="253.80" x2="860.46" y2="284.10" stroke="#0070e0" stroke-width="1.0"/>
<rect x="855.76" y="267.40" width="9.40" height="8.90" fill="#0080ff"/>
<line x1="870.11" y1="265.00" x2="870.11" y2="284.10" stroke="#d80000" stroke-width="1.0"/>
<rect x="865.40" y="268.20" width="9.40" height="10.50" fill="#ff0000"/>
<line x1="879.75" y1="258.30" x2="879.75" y2="277.60" stroke="#0070e0" stroke-width="1.0"/>
<rect x="875.05" y="266.20" width="9.40" height="4.60" fill="#0080ff"/>
<line x1="889.39" y1="271.00" x2="889.39" y2="295.50" stroke="#0070e0" stroke-width="1.0"/>
<rect x="884.69" y="271.30" width="9.40" height="15.20" fill="#0080ff"/>
<line x1="899.04" y1="266.60" x2="899.04" y2="293.20" stroke="#d80000" stroke-width="1.0"/>
<rect x="894.34" y="272.10" width="9.40" height="15.90" fill="#ff0000"/>
<line x1="908.69" y1="263.50" x2="908.69" y2="296.30" stroke="#d80000" stroke-width="1.0"/>
<rect x="903.99" y="269.30" width="9.40" height="2.00" fill="#ff0000"/>
<line x1="918.33" y1="256.00" x2="918.33" y2="285.10" stroke="#0070e0" stroke-width="1.0"/>
<rect x="913.63" y="266.20" width="9.40" height="14.00" fill="#0080ff"/>
<text x="6.20" y="189.40" font-family="'Liberation Mono','IPAGothic',monospace" font-size="9.87" fill="#d8d8d8" textLength="19.74" lengthAdjust="spacingAndGlyphs">日付</text>
<text transform="scale(0.8,1)" x="35.51 41.68 47.85 54.02 60.18 66.35 72.52 78.69 84.86 91.03 97.20 103.37" y="189.40" text-anchor="middle" font-family="'Liberation Sans','IPAGothic',sans-serif" font-size="10.14" fill="#d8d8d8">:2024/02/14 </text>
<text x="85.16" y="189.40" font-family="'Liberation Mono','IPAGothic',monospace" font-size="9.87" fill="#d8d8d8" textLength="19.74" lengthAdjust="spacingAndGlyphs">始値</text>
<text transform="scale(0.8,1)" x="134.21 140.38 146.55 152.72 158.88 165.05 171.22" y="189.40" text-anchor="middle" font-family="'Liberation Sans','IPAGothic',sans-serif" font-size="10.14" fill="#d8d8d8">:4,325 </text>
<text x="139.44" y="189.40" font-family="'Liberation Mono','IPAGothic',monospace" font-size="9.87" fill="#d8d8d8" textLength="19.74" lengthAdjust="spacingAndGlyphs">高値</text>
<text transform="scale(0.8,1)" x="202.07 208.23 214.40 220.57 226.74 232.91 239.08" y="189.40" text-anchor="middle" font-family="'Liberation Sans','IPAGothic',sans-serif" font-size="10.14" fill="#d8d8d8">:4,350 </text>
<text x="193.73" y="189.40" font-family="'Liberation Mono','IPAGothic',monospace" font-size="9.87" fill="#d8d8d8" textLength="19.74" lengthAdjust="spacingAndGlyphs">安値</text>
<text transform="scale(0.8,1)" x="269.92 276.09 282.26 288.43 294.60 300.77 306.93" y="189.40" text-anchor="middle" font-family="'Liberation Sans','IPAGothic',sans-serif" font-size="10.14" fill="#d8d8d8">:4,278 </text>
<text x="248.01" y="189.40" font-family="'Liberation Mono','IPAGothic',monospace" font-size="9.87" fill="#d8d8d8" textLength="19.74" lengthAdjust="spacingAndGlyphs">終値</text>
<text transform="scale(0.8,1)" x="337.78 343.95 350.12 356.28 362.45 368.62" y="189.40" text-anchor="middle" font-family="'Liberation Sans','IPAGothic',sans-serif" font-size="10.14" fill="#d8d8d8">:4,290</text>
<rect x="4.80" y="380.20" width="967.90" height="1.80" fill="#9c9c9c"/>
<rect x="970.80" y="179.60" width="1.35" height="202.40" fill="#b0b0b0"/>
<text transform="scale(0.8,1)" x="72.08 78.25" y="389.20" text-anchor="middle" font-family="'Liberation Sans','IPAGothic',sans-serif" font-size="10.14" fill="#d0d0d0">10</text>
<text transform="scale(0.8,1)" x="325.96 332.13" y="389.20" text-anchor="middle" font-family="'Liberation Sans','IPAGothic',sans-serif" font-size="10.14" fill="#d0d0d0">11</text>
<text transform="scale(0.8,1)" x="566.46 572.63" y="389.20" text-anchor="middle" font-family="'Liberation Sans','IPAGothic',sans-serif" font-size="10.14" fill="#d0d0d0">12</text>
<text transform="scale(0.8,1)" x="819.71 825.88" y="389.20" text-anchor="middle" font-family="'Liberation Sans','IPAGothic',sans-serif" font-size="10.14" fill="#d0d0d0">01</text>
<text transform="scale(0.8,1)" x="1049.33 1055.50" y="389.20" text-anchor="middle" font-family="'Liberation Sans','IPAGothic',sans-serif" font-size="10.14" fill="#d0d0d0">02</text>
<text transform="scale(0.8,1)" x="819.58 825.75 831.92 838.09" y="377.10" text-anchor="middle" font-family="'Liberation Sans','IPAGothic',sans-serif" font-size="10.14" fill="#d0d0d0">2024</text>
<g clip-path="url(#ax2)">
<text transform="scale(0.8,1)" x="1217.96 1224.13 1230.30 1236.47 1242.63" y="194.70" text-anchor="middle" font-family="'Liberation Sans','IPAGothic',sans-serif" font-size="10.14" fill="#b4b4b4">4,500</text>
<text transform="scale(0.8,1)" x="1217.96 1224.13 1230.30 1236.47 1242.63" y="234.70" text-anchor="middle" font-family="'Liberation Sans','IPAGothic',sans-serif" font-size="10.14" fill="#b4b4b4">4,400</text>
<text transform="scale(0.8,1)" x="1217.96 1224.13 1230.30 1236.47 1242.63" y="274.70" text-anchor="middle" font-family="'Liberation Sans','IPAGothic',sans-serif" font-size="10.14" fill="#b4b4b4">4,300</text>
<text transform="scale(0.8,1)" x="1217.96 1224.13 1230.30 1236.47 1242.63" y="315.40" text-anchor="middle" font-family="'Liberation Sans','IPAGothic',sans-serif" font-size="10.14" fill="#b4b4b4">4,200</text>
<text transform="scale(0.8,1)" x="1217.96 1224.13 1230.30 1236.47 1242.63" y="355.50" text-anchor="middle" font-family="'Liberation Sans','IPAGothic',sans-serif" font-size="10.14" fill="#b4b4b4">4,100</text>
<text transform="scale(0.8,1)" x="1217.96 1224.13 1230.30 1236.47 1242.63" y="395.50" text-anchor="middle" font-family="'Liberation Sans','IPAGothic',sans-serif" font-size="10.14" fill="#b4b4b4">4,000</text>
</g>
<rect x="970.90" y="272.00" width="48.00" height="16.40" fill="#d9d9d9"/>
<text transform="scale(0.88,1)" x="1118.39 1124.05 1129.70 1135.36 1141.01" y="282.80" text-anchor="middle" font-family="'Liberation Sans','IPAGothic',sans-serif" font-size="10.83" fill="#000" font-weight="bold">4,290</text>
<rect x="4.80" y="394.60" width="1014.20" height="3.10" fill="#f8f8f8"/>
<rect x="4.80" y="397.70" width="1014.10" height="152.20" fill="#1a1a1a"/>
<rect x="4.80" y="397.25" width="967.30" height="2.05" fill="#c4c4c4"/>
<rect x="4.80" y="399.30" width="1.00" height="137.80" fill="#c0c0c0"/>
<rect x="5.80" y="399.30" width="965.70" height="137.80" fill="#000"/>
<g clip-path="url(#cp397)">
<clipPath id="cp397"><rect x="5.8" y="399.3" width="965.7" height="137.8"/></clipPath>
<line x1="5.80" y1="403.30" x2="971.50" y2="403.30" stroke="#464646" stroke-width="1.0"/>
<line x1="5.80" y1="403.30" x2="971.50" y2="403.30" stroke="#868686" stroke-width="1.0" stroke-dasharray="1.4 1.3"/>
<line x1="5.80" y1="436.20" x2="971.50" y2="436.20" stroke="#464646" stroke-width="1.0"/>
<line x1="5.80" y1="436.20" x2="971.50" y2="436.20" stroke="#868686" stroke-width="1.0" stroke-dasharray="1.4 1.3"/>
<line x1="5.80" y1="469.00" x2="971.50" y2="469.00" stroke="#464646" stroke-width="1.0"/>
<line x1="5.80" y1="469.00" x2="971.50" y2="469.00" stroke="#868686" stroke-width="1.0" stroke-dasharray="1.4 1.3"/>
<line x1="5.80" y1="501.90" x2="971.50" y2="501.90" stroke="#464646" stroke-width="1.0"/>
<line x1="5.80" y1="501.90" x2="971.50" y2="501.90" stroke="#868686" stroke-width="1.0" stroke-dasharray="1.4 1.3"/>
<line x1="5.80" y1="534.60" x2="971.50" y2="534.60" stroke="#464646" stroke-width="1.0"/>
<line x1="5.80" y1="534.60" x2="971.50" y2="534.60" stroke="#868686" stroke-width="1.0" stroke-dasharray="1.4 1.3"/>
<line x1="54.70" y1="399.30" x2="54.70" y2="537.10" stroke="#323232" stroke-width="1.2"/>
<line x1="54.70" y1="399.30" x2="54.70" y2="537.10" stroke="#666666" stroke-width="1.2" stroke-dasharray="1.4 1.4"/>
<line x1="257.80" y1="399.30" x2="257.80" y2="537.10" stroke="#323232" stroke-width="1.2"/>
<line x1="257.80" y1="399.30" x2="257.80" y2="537.10" stroke="#666666" stroke-width="1.2" stroke-dasharray="1.4 1.4"/>
<line x1="450.20" y1="399.30" x2="450.20" y2="537.10" stroke="#323232" stroke-width="1.2"/>
<line x1="450.20" y1="399.30" x2="450.20" y2="537.10" stroke="#666666" stroke-width="1.2" stroke-dasharray="1.4 1.4"/>
<line x1="652.80" y1="399.30" x2="652.80" y2="537.10" stroke="#323232" stroke-width="1.2"/>
<line x1="652.80" y1="399.30" x2="652.80" y2="537.10" stroke="#666666" stroke-width="1.2" stroke-dasharray="1.4 1.4"/>
<line x1="836.50" y1="399.30" x2="836.50" y2="537.10" stroke="#323232" stroke-width="1.2"/>
<line x1="836.50" y1="399.30" x2="836.50" y2="537.10" stroke="#666666" stroke-width="1.2" stroke-dasharray="1.4 1.4"/>
</g>
<polyline points="6.4,512.0 11.7,511.8 21.3,511.6 31.0,511.3 40.6,510.5 50.3,510.0 59.9,509.7 69.6,509.2 79.2,508.9 88.9,508.9 98.5,508.6 108.1,508.5 117.8,508.2 127.4,507.8 137.1,507.0 146.7,506.3 156.4,505.7 166.0,504.3 175.7,502.9 185.3,501.7 195.0,500.1 204.6,498.9 214.2,497.8 223.9,496.2 233.5,495.0 243.2,493.9 252.8,493.1 262.5,492.0 272.1,490.8 281.8,489.2 291.4,487.6 301.0,485.7 310.7,484.0 320.3,482.0 330.0,480.2 339.6,478.6 349.3,477.0 358.9,475.8 368.6,473.9 378.2,472.7 387.9,471.4 397.5,470.3 407.1,469.2 416.8,468.0 426.4,466.7 436.1,465.6 445.7,464.4 455.4,463.0 465.0,461.7 474.7,460.2 484.3,459.1 493.9,457.5 503.6,456.6 513.2,455.8 522.9,455.2 532.5,454.7 542.2,453.9 551.8,453.1 561.5,452.0 571.1,450.8 580.8,449.7 590.4,448.6 600.0,447.7 609.7,446.9 619.3,446.4 629.0,445.3 638.6,445.0 648.3,445.3 657.9,445.0 667.6,445.0 677.2,445.0 686.9,445.0 696.5,445.0 706.1,445.0 715.8,444.8 725.4,444.8 735.1,444.8 744.7,444.9 754.4,444.4 764.0,444.1 773.7,443.6 783.3,443.6 792.9,443.3 802.6,442.8 812.2,442.8 821.9,443.3 831.5,443.3 841.2,442.8 850.8,442.8 860.5,442.5 870.1,442.2 879.8,441.4 889.4,440.3 899.0,439.8 908.7,439.7 918.3,439.3" fill="none" stroke="#00b000" stroke-width="1.1" stroke-linejoin="round" stroke-linecap="round" clip-path="url(#cp397)"/>
<polyline points="6.4,505.8 11.7,505.6 21.3,505.3 31.0,504.6 40.6,503.5 50.3,503.5 59.9,504.2 69.6,504.2 79.2,504.2 88.9,504.2 98.5,504.2 108.1,504.2 117.8,503.5 127.4,503.2 137.1,502.7 146.7,501.9 156.4,501.1 166.0,500.1 175.7,498.6 185.3,495.8 195.0,493.1 204.6,490.8 214.2,488.4 223.9,486.1 233.5,484.0 243.2,481.7 252.8,479.8 262.5,477.9 272.1,476.2 281.8,474.7 291.4,472.0 301.0,468.4 310.7,464.5 320.3,460.9 330.0,457.0 339.6,453.1 349.3,450.3 358.9,447.7 368.6,444.8 378.2,442.5 387.9,440.9 397.5,439.5 407.1,438.3 416.8,437.5 426.4,437.0 436.1,436.7 445.7,436.2 455.4,435.6 465.0,434.7 474.7,434.1 484.3,433.1 493.9,432.5 503.6,433.1 513.2,433.6 522.9,434.4 532.5,435.6 542.2,436.7 551.8,438.0 561.5,439.8 571.1,441.4 580.8,442.7 590.4,444.2 600.0,445.8 609.7,446.9 619.3,448.1 629.0,449.2 638.6,450.0 648.3,450.8 657.9,451.6 667.6,452.3 677.2,453.1 686.9,453.6 696.5,454.7 706.1,455.5 715.8,455.9 725.4,455.9 735.1,455.9 744.7,456.0 754.4,455.5 764.0,454.2 773.7,452.7 783.3,450.8 792.9,449.6 802.6,447.2 812.2,445.7 821.9,444.6 831.5,443.3 841.2,441.8 850.8,439.4 860.5,437.0 870.1,435.7 879.8,434.3 889.4,432.2 899.0,429.6 908.7,428.0 918.3,427.4" fill="none" stroke="#00b8c8" stroke-width="1.1" stroke-linejoin="round" stroke-linecap="round" clip-path="url(#cp397)"/>
<polyline points="6.4,495.7 11.7,495.4 21.3,494.9 31.0,494.9 40.6,495.7 50.3,498.3 59.9,502.2 69.6,505.0 79.2,508.2 88.9,510.8 98.5,513.6 108.1,516.0 117.8,516.8 127.4,516.4 137.1,513.6 146.7,507.4 156.4,501.0 166.0,495.4 175.7,487.6 185.3,479.0 195.0,469.7 204.6,462.6 214.2,455.1 223.9,448.6 233.5,444.7 243.2,439.5 252.8,436.8 262.5,436.8 272.1,438.1 281.8,439.5 291.4,439.7 301.0,440.2 310.7,439.8 320.3,438.3 330.0,437.2 339.6,435.2 349.3,434.1 358.9,432.8 368.6,431.2 378.2,431.2 387.9,432.8 397.5,434.4 407.1,436.7 416.8,438.0 426.4,438.3 436.1,438.3 445.7,437.5 455.4,436.2 465.0,431.7 474.7,428.6 484.3,426.9 493.9,423.8 503.6,424.7 513.2,427.8 522.9,432.0 532.5,437.2 542.2,442.7 551.8,451.2 561.5,456.2 571.1,460.9 580.8,465.3 590.4,468.4 600.0,468.8 609.7,469.8 619.3,467.5 629.0,466.4 638.6,466.4 648.3,466.7 657.9,466.4 667.6,464.4 677.2,463.0 686.9,461.4 696.5,459.4 706.1,457.0 715.8,453.1 725.4,448.1 735.1,441.4 744.7,437.5 754.4,434.7 764.0,430.8 773.7,427.7 783.3,426.4 792.9,425.7 802.6,425.8 812.2,426.4 821.9,427.2 831.5,427.7 841.2,427.7 850.8,427.4 860.5,427.2 870.1,425.9 879.8,424.3 889.4,422.6 899.0,420.6 908.7,419.0 918.3,417.6" fill="none" stroke="#b4b000" stroke-width="1.1" stroke-linejoin="round" stroke-linecap="round" clip-path="url(#cp397)"/>
<polyline points="6.4,497.2 11.7,497.2 21.3,488.3 31.0,498.0 40.6,500.3 50.3,519.6 59.9,529.2 69.6,520.7 79.2,518.8 88.9,523.3 98.5,516.8 108.1,513.6 117.8,510.2 127.4,502.7 137.1,487.8 146.7,470.7 156.4,474.1 166.0,468.9 175.7,450.9 185.3,433.7 195.0,437.6 204.6,441.5 214.2,433.2 223.9,431.4 233.5,435.3 243.2,429.0 252.8,442.3 262.5,443.9 272.1,447.0 281.8,450.4 291.4,440.8 301.0,437.0 310.7,433.1 320.3,420.0 330.0,420.0 339.6,431.2 349.3,431.6 358.9,438.3 368.6,426.6 378.2,443.8 387.9,452.0 397.5,446.1 407.1,440.6 416.8,437.0 426.4,430.0 436.1,428.4 445.7,428.4 455.4,422.7 465.0,404.4 474.7,424.2 484.3,424.2 493.9,416.9 503.6,443.8 513.2,458.1 522.9,463.0 532.5,476.6 542.2,467.5 551.8,473.4 561.5,475.0 571.1,463.6 580.8,460.9 590.4,472.7 600.0,467.2 609.7,465.6 619.3,461.2 629.0,460.9 638.6,466.4 648.3,479.4 657.9,462.5 667.6,448.1 677.2,459.4 686.9,452.3 696.5,441.9 706.1,438.3 715.8,426.6 725.4,423.1 735.1,423.1 744.7,424.6 754.4,426.1 764.0,424.9 773.7,424.6 783.3,426.1 792.9,433.6 802.6,425.3 812.2,427.7 821.9,432.7 831.5,427.7 841.2,424.9 850.8,421.8 860.5,418.3 870.1,420.6 879.8,420.6 889.4,409.9 899.0,408.8 908.7,415.1 918.3,416.8" fill="none" stroke="#ff0000" stroke-width="1.65" stroke-linejoin="round" stroke-linecap="round" clip-path="url(#cp397)"/>
<text transform="scale(0.8,1)" x="10.83" y="408.20" text-anchor="middle" font-family="'Liberation Sans','IPAGothic',sans-serif" font-size="10.14" fill="#d8d8d8">[</text>
<text x="11.13" y="408.20" font-family="'Liberation Mono','IPAGothic',monospace" font-size="9.87" fill="#d8d8d8" textLength="9.87" lengthAdjust="spacingAndGlyphs">金</text>
<text x="25.94" y="408.20" font-family="'Liberation Mono','IPAGothic',monospace" font-size="9.87" fill="#d8d8d8" textLength="39.48" lengthAdjust="spacingAndGlyphs">先限連続</text>
<text transform="scale(0.8,1)" x="84.86 91.03 97.20 103.37 109.53 115.70" y="408.20" text-anchor="middle" font-family="'Liberation Sans','IPAGothic',sans-serif" font-size="10.14" fill="#d8d8d8"> 9,681</text>
<text x="95.03" y="408.20" font-family="'Liberation Mono','IPAGothic',monospace" font-size="9.87" fill="#d8d8d8" textLength="9.87" lengthAdjust="spacingAndGlyphs">×</text>
<text transform="scale(0.8,1)" x="134.21 140.38 146.55 152.72 158.88" y="408.20" text-anchor="middle" font-family="'Liberation Sans','IPAGothic',sans-serif" font-size="10.14" fill="#d8d8d8">1.00]</text>
<text x="129.57" y="408.20" font-family="'Liberation Mono','IPAGothic',monospace" font-size="9.87" fill="#d8d8d8" textLength="9.87" lengthAdjust="spacingAndGlyphs">－</text>
<text transform="scale(0.8,1)" x="177.39" y="408.20" text-anchor="middle" font-family="'Liberation Sans','IPAGothic',sans-serif" font-size="10.14" fill="#d8d8d8">[</text>
<text x="144.38" y="408.20" font-family="'Liberation Mono','IPAGothic',monospace" font-size="9.87" fill="#d8d8d8" textLength="19.74" lengthAdjust="spacingAndGlyphs">白金</text>
<text x="169.06" y="408.20" font-family="'Liberation Mono','IPAGothic',monospace" font-size="9.87" fill="#d8d8d8" textLength="39.48" lengthAdjust="spacingAndGlyphs">先限連続</text>
<text transform="scale(0.8,1)" x="263.75 269.92 276.09 282.26 288.43 294.60" y="408.20" text-anchor="middle" font-family="'Liberation Sans','IPAGothic',sans-serif" font-size="10.14" fill="#d8d8d8"> 4,290</text>
<text x="238.14" y="408.20" font-family="'Liberation Mono','IPAGothic',monospace" font-size="9.87" fill="#d8d8d8" textLength="9.87" lengthAdjust="spacingAndGlyphs">×</text>
<text transform="scale(0.8,1)" x="313.10 319.27 325.44 331.61 337.78 343.95" y="408.20" text-anchor="middle" font-family="'Liberation Sans','IPAGothic',sans-serif" font-size="10.14" fill="#d8d8d8">1.00] </text>
<text x="277.62" y="408.20" font-family="'Liberation Mono','IPAGothic',monospace" font-size="9.87" fill="#d8d8d8" textLength="19.74" lengthAdjust="spacingAndGlyphs">終値</text>
<text x="302.30" y="408.20" font-family="'Liberation Mono','IPAGothic',monospace" font-size="9.87" fill="#d8d8d8" textLength="19.74" lengthAdjust="spacingAndGlyphs">日付</text>
<text transform="scale(0.8,1)" x="405.63 411.80 417.97 424.14 430.31 436.48 442.65 448.82 454.98 461.15 467.32 473.49 479.66 485.83 492.00 498.17 504.33" y="408.20" text-anchor="middle" font-family="'Liberation Sans','IPAGothic',sans-serif" font-size="10.14" fill="#d8d8d8">:2024/02/14 5,391</text>
<rect x="4.80" y="536.30" width="967.90" height="1.80" fill="#9c9c9c"/>
<rect x="970.80" y="399.30" width="1.35" height="138.80" fill="#b0b0b0"/>
<text transform="scale(0.8,1)" x="72.08 78.25" y="545.30" text-anchor="middle" font-family="'Liberation Sans','IPAGothic',sans-serif" font-size="10.14" fill="#d0d0d0">10</text>
<text transform="scale(0.8,1)" x="325.96 332.13" y="545.30" text-anchor="middle" font-family="'Liberation Sans','IPAGothic',sans-serif" font-size="10.14" fill="#d0d0d0">11</text>
<text transform="scale(0.8,1)" x="566.46 572.63" y="545.30" text-anchor="middle" font-family="'Liberation Sans','IPAGothic',sans-serif" font-size="10.14" fill="#d0d0d0">12</text>
<text transform="scale(0.8,1)" x="819.71 825.88" y="545.30" text-anchor="middle" font-family="'Liberation Sans','IPAGothic',sans-serif" font-size="10.14" fill="#d0d0d0">01</text>
<text transform="scale(0.8,1)" x="1049.33 1055.50" y="545.30" text-anchor="middle" font-family="'Liberation Sans','IPAGothic',sans-serif" font-size="10.14" fill="#d0d0d0">02</text>
<text transform="scale(0.8,1)" x="819.58 825.75 831.92 838.09" y="533.20" text-anchor="middle" font-family="'Liberation Sans','IPAGothic',sans-serif" font-size="10.14" fill="#d0d0d0">2024</text>
<g clip-path="url(#ax3)">
<text transform="scale(0.8,1)" x="1217.96 1224.13 1230.30 1236.47 1242.63" y="402.20" text-anchor="middle" font-family="'Liberation Sans','IPAGothic',sans-serif" font-size="10.14" fill="#b4b4b4">5,500</text>
<text transform="scale(0.8,1)" x="1217.96 1224.13 1230.30 1236.47 1242.63" y="435.10" text-anchor="middle" font-family="'Liberation Sans','IPAGothic',sans-serif" font-size="10.14" fill="#b4b4b4">5,250</text>
<text transform="scale(0.8,1)" x="1217.96 1224.13 1230.30 1236.47 1242.63" y="467.90" text-anchor="middle" font-family="'Liberation Sans','IPAGothic',sans-serif" font-size="10.14" fill="#b4b4b4">5,000</text>
<text transform="scale(0.8,1)" x="1217.96 1224.13 1230.30 1236.47 1242.63" y="500.80" text-anchor="middle" font-family="'Liberation Sans','IPAGothic',sans-serif" font-size="10.14" fill="#b4b4b4">4,750</text>
<text transform="scale(0.8,1)" x="1217.96 1224.13 1230.30 1236.47 1242.63" y="533.50" text-anchor="middle" font-family="'Liberation Sans','IPAGothic',sans-serif" font-size="10.14" fill="#b4b4b4">4,500</text>
</g>
<rect x="970.90" y="410.20" width="48.00" height="16.40" fill="#d9d9d9"/>
<text transform="scale(0.88,1)" x="1118.39 1124.05 1129.70 1135.36 1141.01" y="421.00" text-anchor="middle" font-family="'Liberation Sans','IPAGothic',sans-serif" font-size="10.83" fill="#000" font-weight="bold">5,391</text>
<rect x="6.60" y="410.80" width="128.80" height="38.40" fill="#ffffff"/>
<text x="7.40" y="419.20" font-family="'Liberation Mono','IPAGothic',monospace" font-size="8.82" fill="#000" textLength="35.28" lengthAdjust="spacingAndGlyphs" stroke="#000" stroke-width="0.25">移動平均</text>
<text transform="scale(0.8,1)" x="56.11" y="419.20" text-anchor="middle" font-family="'Liberation Sans','IPAGothic',sans-serif" font-size="9.06" fill="#000" stroke="#000" stroke-width="0.25">(</text>
<text x="47.09" y="419.20" font-family="'Liberation Mono','IPAGothic',monospace" font-size="8.82" fill="#000" textLength="8.82" lengthAdjust="spacingAndGlyphs" stroke="#000" stroke-width="0.25">金</text>
<text x="60.32" y="419.20" font-family="'Liberation Mono','IPAGothic',monospace" font-size="8.82" fill="#000" textLength="17.64" lengthAdjust="spacingAndGlyphs" stroke="#000" stroke-width="0.25">白金</text>
<text transform="scale(0.8,1)" x="100.21" y="419.20" text-anchor="middle" font-family="'Liberation Sans','IPAGothic',sans-serif" font-size="9.06" fill="#000" stroke="#000" stroke-width="0.25">)</text>
<line x1="7.20" y1="425.40" x2="15.40" y2="425.40" stroke="#f0f000" stroke-width="1.0"/>
<text x="15.90" y="428.80" font-family="'Liberation Mono','IPAGothic',monospace" font-size="8.82" fill="#000" textLength="26.46" lengthAdjust="spacingAndGlyphs" stroke="#000" stroke-width="0.25">短期線</text>
<text transform="scale(0.8,1)" x="55.71 61.22 66.73 72.24 77.76 83.27 88.78 94.29 99.81 105.32 110.83 116.34 121.86 127.37 132.88 138.39 143.91 149.42 154.93 160.44" y="428.80" text-anchor="middle" font-family="'Liberation Sans','IPAGothic',sans-serif" font-size="9.06" fill="#000" stroke="#000" stroke-width="0.25">(9)(0)(SMA)(C):5,383</text>
<line x1="7.20" y1="435.00" x2="15.40" y2="435.00" stroke="#00e0ff" stroke-width="1.0"/>
<text x="15.90" y="438.40" font-family="'Liberation Mono','IPAGothic',monospace" font-size="8.82" fill="#000" textLength="26.46" lengthAdjust="spacingAndGlyphs" stroke="#000" stroke-width="0.25">中期線</text>
<text transform="scale(0.8,1)" x="55.71 61.22 66.73 72.24 77.76 83.27 88.78 94.29 99.81 105.32 110.83 116.34 121.86 127.37 132.88 138.39 143.91 149.42 154.93 160.44 165.96" y="438.40" text-anchor="middle" font-family="'Liberation Sans','IPAGothic',sans-serif" font-size="9.06" fill="#000" stroke="#000" stroke-width="0.25">(26)(0)(SMA)(C):5,314</text>
<line x1="7.20" y1="444.60" x2="15.40" y2="444.60" stroke="#00e000" stroke-width="1.0"/>
<text x="15.90" y="448.00" font-family="'Liberation Mono','IPAGothic',monospace" font-size="8.82" fill="#000" textLength="26.46" lengthAdjust="spacingAndGlyphs" stroke="#000" stroke-width="0.25">長期線</text>
<text transform="scale(0.8,1)" x="55.71 61.22 66.73 72.24 77.76 83.27 88.78 94.29 99.81 105.32 110.83 116.34 121.86 127.37 132.88 138.39 143.91 149.42 154.93 160.44 165.96" y="448.00" text-anchor="middle" font-family="'Liberation Sans','IPAGothic',sans-serif" font-size="9.06" fill="#000" stroke="#000" stroke-width="0.25">(52)(0)(SMA)(C):5,219</text>
<path d="M120.0,418.6 L124.2,411.6 L128.4,418.6 Z" fill="none" stroke="#555" stroke-width="0.8"/>
<path d="M128.8,411.6 L135.2,418.8 M135.2,411.6 L128.8,418.8" fill="none" stroke="#666" stroke-width="0.8"/>
<g><rect x="8.4" y="6.2" width="10.8" height="10.8" fill="#ebebeb"/><rect x="8.05" y="6.0" width="0.85" height="11.4" fill="#7c7c7c"/><rect x="8.05" y="16.4" width="11.1" height="1.1" fill="#949494"/><polyline points="9.8,14.3 11.6,11.4 13.4,12.7 14.7,9.0 16.5,7.5 18.2,11.4" fill="none" stroke="#3c8ce8" stroke-width="1.3" stroke-linejoin="round"/><g fill="#f03454"><circle cx="9.8" cy="14.3" r="0.95"/><circle cx="11.6" cy="11.4" r="0.95"/><circle cx="13.4" cy="12.7" r="0.95"/><circle cx="14.7" cy="9.0" r="0.95"/><circle cx="16.5" cy="7.5" r="1.05"/><circle cx="18.2" cy="11.4" r="1.05"/></g></g>
<text x="23.90" y="14.90" font-family="'Liberation Sans','IPAGothic',sans-serif" font-size="9.6" fill="#0a0a0a" stroke="#0a0a0a" stroke-width="0.2" textLength="9.20" lengthAdjust="spacingAndGlyphs">金</text>
<text x="33.60" y="14.60" font-family="'Liberation Sans','IPAGothic',sans-serif" font-size="11.6" fill="#0a0a0a" stroke="#0a0a0a" stroke-width="0.2" textLength="2.60" lengthAdjust="spacingAndGlyphs">[</text>
<text x="36.80" y="14.90" font-family="'Liberation Sans','IPAGothic',sans-serif" font-size="9.6" fill="#0a0a0a" stroke="#0a0a0a" stroke-width="0.2" textLength="38.20" lengthAdjust="spacingAndGlyphs">先限連続</text>
<text x="75.60" y="14.60" font-family="'Liberation Sans','IPAGothic',sans-serif" font-size="11.6" fill="#0a0a0a" stroke="#0a0a0a" stroke-width="0.2" textLength="2.60" lengthAdjust="spacingAndGlyphs">]</text>
<text x="79.40" y="14.90" font-family="'Liberation Sans','IPAGothic',sans-serif" font-size="11.6" fill="#0a0a0a" stroke="#0a0a0a" stroke-width="0.2" textLength="14.60" lengthAdjust="spacingAndGlyphs">1.00</text>
<text x="98.60" y="14.30" font-family="'Liberation Sans','IPAGothic',sans-serif" font-size="11.6" fill="#0a0a0a" stroke="#0a0a0a" stroke-width="0.2" textLength="3.80" lengthAdjust="spacingAndGlyphs">-</text>
<text x="106.00" y="14.90" font-family="'Liberation Sans','IPAGothic',sans-serif" font-size="9.6" fill="#0a0a0a" stroke="#0a0a0a" stroke-width="0.2" textLength="18.80" lengthAdjust="spacingAndGlyphs">白金</text>
<text x="125.40" y="14.60" font-family="'Liberation Sans','IPAGothic',sans-serif" font-size="11.6" fill="#0a0a0a" stroke="#0a0a0a" stroke-width="0.2" textLength="2.60" lengthAdjust="spacingAndGlyphs">[</text>
<text x="128.60" y="14.90" font-family="'Liberation Sans','IPAGothic',sans-serif" font-size="9.6" fill="#0a0a0a" stroke="#0a0a0a" stroke-width="0.2" textLength="37.80" lengthAdjust="spacingAndGlyphs">先限連続</text>
<text x="167.00" y="14.60" font-family="'Liberation Sans','IPAGothic',sans-serif" font-size="11.6" fill="#0a0a0a" stroke="#0a0a0a" stroke-width="0.2" textLength="2.60" lengthAdjust="spacingAndGlyphs">]</text>
<text x="170.60" y="14.90" font-family="'Liberation Sans','IPAGothic',sans-serif" font-size="11.6" fill="#0a0a0a" stroke="#0a0a0a" stroke-width="0.2" textLength="14.80" lengthAdjust="spacingAndGlyphs">1.00</text>
<rect x="973.6" y="4.4" width="13.4" height="14.2" rx="2.6" fill="url(#btn)" stroke="#a0a0a0" stroke-width="0.8"/>
<rect x="989.7" y="4.4" width="13.4" height="14.2" rx="2.6" fill="url(#btn)" stroke="#a0a0a0" stroke-width="0.8"/>
<rect x="1005.6" y="4.4" width="13.4" height="14.2" rx="2.6" fill="url(#btn)" stroke="#a0a0a0" stroke-width="0.8"/>
<rect x="977.2" y="13.1" width="5.2" height="1.7" fill="#555"/>
<rect x="993.8" y="9.0" width="5.6" height="5.4" fill="none" stroke="#555" stroke-width="1.1"/><rect x="993.25" y="8.4" width="6.7" height="1.5" fill="#555"/>
<path d="M1009.6,9.0 L1015.5,14.6 M1015.5,9.0 L1009.6,14.6" stroke="#5c5c5c" stroke-width="1.3" fill="none"/>
<rect x="956.2" y="6.8" width="7.8" height="10.2" rx="0.8" fill="#e2e2e2" stroke="#b4b4b4" stroke-width="0.9"/><rect x="959.1" y="9.3" width="7.4" height="5.0" rx="0.6" fill="#dcdcdc" stroke="#6a6a6a" stroke-width="1.3"/>
<text x="8.80" y="33.00" font-family="'Liberation Sans','IPAGothic',sans-serif" font-size="9.5" fill="#222" textLength="9.40" lengthAdjust="spacingAndGlyphs" stroke="#222" stroke-width="0.15">金</text>
<text x="27.80" y="33.00" font-family="'Liberation Sans','IPAGothic',sans-serif" font-size="9.5" fill="#222" textLength="37.90" lengthAdjust="spacingAndGlyphs" stroke="#222" stroke-width="0.15">先限連続</text>
<text x="120.30" y="33.00" font-family="'Liberation Sans','IPAGothic',sans-serif" font-size="9.5" fill="#222" textLength="18.40" lengthAdjust="spacingAndGlyphs" stroke="#222" stroke-width="0.15">白金</text>
<text x="148.10" y="33.00" font-family="'Liberation Sans','IPAGothic',sans-serif" font-size="9.5" fill="#222" textLength="37.90" lengthAdjust="spacingAndGlyphs" stroke="#222" stroke-width="0.15">先限連続</text>
<text x="241.10" y="33.00" font-family="'Liberation Sans','IPAGothic',sans-serif" font-size="9.5" fill="#222" textLength="17.00" lengthAdjust="spacingAndGlyphs" stroke="#222" stroke-width="0.15">日足</text>
<rect x="71.30" y="23.00" width="37.50" height="13.40" fill="#ffffff"/>
<rect x="98.10" y="23.50" width="10.10" height="11.40" fill="#ececec" stroke="#b0b0b0" stroke-width="0.7"/>
<line x1="98.10" y1="29.20" x2="108.20" y2="29.20" stroke="#b0b0b0" stroke-width="0.7"/>
<path d="M101.05,27.7 L103.15,25.1 L105.25,27.7 Z M101.05,30.7 L103.15,33.3 L105.25,30.7 Z" fill="#222"/>
<text x="73.20" y="31.80" font-family="'Liberation Sans','IPAGothic',sans-serif" font-size="10" fill="#222" textLength="14.40" lengthAdjust="spacingAndGlyphs" stroke="#222" stroke-width="0.15">1.00</text>
<rect x="191.90" y="23.00" width="36.90" height="13.40" fill="#ffffff"/>
<rect x="218.10" y="23.50" width="10.10" height="11.40" fill="#ececec" stroke="#b0b0b0" stroke-width="0.7"/>
<line x1="218.10" y1="29.20" x2="228.20" y2="29.20" stroke="#b0b0b0" stroke-width="0.7"/>
<path d="M221.05,27.7 L223.15,25.1 L225.25,27.7 Z M221.05,30.7 L223.15,33.3 L225.25,30.7 Z" fill="#222"/>
<text x="193.80" y="31.80" font-family="'Liberation Sans','IPAGothic',sans-serif" font-size="10" fill="#222" textLength="14.40" lengthAdjust="spacingAndGlyphs" stroke="#222" stroke-width="0.15">1.00</text>
<rect x="271.80" y="23.00" width="35.60" height="13.40" fill="#ffffff"/>
<rect x="296.10" y="23.50" width="10.70" height="11.40" fill="#ececec" stroke="#b0b0b0" stroke-width="0.7"/>
<line x1="296.10" y1="29.20" x2="306.80" y2="29.20" stroke="#b0b0b0" stroke-width="0.7"/>
<path d="M299.35,27.7 L301.45,25.1 L303.55,27.7 Z M299.35,30.7 L301.45,33.3 L303.55,30.7 Z" fill="#222"/>
<text x="273.70" y="31.80" font-family="'Liberation Sans','IPAGothic',sans-serif" font-size="10" fill="#222" textLength="12.60" lengthAdjust="spacingAndGlyphs" stroke="#222" stroke-width="0.15">100</text>
<line x1="114.10" y1="23.60" x2="114.10" y2="35.60" stroke="#eef0f4" stroke-width="1.0"/>
<line x1="113.20" y1="23.60" x2="113.20" y2="35.60" stroke="#b4b8c2" stroke-width="0.8"/>
<line x1="234.50" y1="23.60" x2="234.50" y2="35.60" stroke="#eef0f4" stroke-width="1.0"/>
<line x1="233.60" y1="23.60" x2="233.60" y2="35.60" stroke="#b4b8c2" stroke-width="0.8"/>
<line x1="312.20" y1="23.60" x2="312.20" y2="35.60" stroke="#eef0f4" stroke-width="1.0"/>
<line x1="311.30" y1="23.60" x2="311.30" y2="35.60" stroke="#b4b8c2" stroke-width="0.8"/>
<line x1="335.10" y1="23.60" x2="335.10" y2="35.60" stroke="#eef0f4" stroke-width="1.0"/>
<line x1="334.20" y1="23.60" x2="334.20" y2="35.60" stroke="#b4b8c2" stroke-width="0.8"/>
<line x1="414.40" y1="23.60" x2="414.40" y2="35.60" stroke="#eef0f4" stroke-width="1.0"/>
<line x1="413.50" y1="23.60" x2="413.50" y2="35.60" stroke="#b4b8c2" stroke-width="0.8"/>
<line x1="460.60" y1="23.60" x2="460.60" y2="35.60" stroke="#eef0f4" stroke-width="1.0"/>
<line x1="459.70" y1="23.60" x2="459.70" y2="35.60" stroke="#b4b8c2" stroke-width="0.8"/>
<path d="M263.6,28.8 L268.2,28.8 L265.9,31.4 Z" fill="#222"/>
<path d="M431.4,28.3 L435.4,28.3 L433.4,30.6 Z" fill="#222"/>
<rect x="314.30" y="22.20" width="13.40" height="13.80" fill="#d6d8dc"/>
<rect x="314.30" y="22.20" width="13.40" height="1.00" fill="#8e9298"/>
<rect x="314.30" y="22.20" width="1.00" height="13.80" fill="#8e9298"/>
<rect x="314.30" y="35.30" width="13.90" height="0.90" fill="#f4f6f8"/>
<rect x="327.40" y="22.20" width="0.90" height="14.00" fill="#f4f6f8"/>
<rect x="319.40" y="27.80" width="7.80" height="7.40" fill="#ececee"/>
<line x1="318.50" y1="24.20" x2="318.50" y2="34.90" stroke="#5c5cc0" stroke-width="0.9"/>
<line x1="316.20" y1="27.20" x2="327.00" y2="27.20" stroke="#5c5cc0" stroke-width="0.9"/>
<path d="M320.8,29.4 L324.2,29.6 L323.3,30.6 L325.8,33.2 L325.0,34.0 L322.4,31.5 L321.2,32.6 Z" fill="#9420b4" stroke="#9420b4" stroke-width="0.4" stroke-linejoin="round"/>
<rect x="337.40" y="22.20" width="13.50" height="13.80" fill="#a2a6aa"/>
<rect x="337.40" y="22.20" width="13.50" height="1.00" fill="#868a90"/>
<rect x="337.40" y="22.20" width="1.00" height="13.80" fill="#868a90"/>
<rect x="337.40" y="35.30" width="14.00" height="0.90" fill="#f4f6f8"/>
<rect x="350.60" y="22.20" width="0.90" height="14.00" fill="#f4f6f8"/>
<path d="M340.6,25.4 L347.4,28.6 L345.4,29.6 L348.5,33.0 L347.2,34.0 L344.2,30.8 L342.3,33.4 Z" fill="#f6f2ff" stroke="#6c54c4" stroke-width="1.2" stroke-linejoin="round"/>
<linearGradient id="hg" x1="0" y1="0" x2="0" y2="1"><stop offset="0" stop-color="#f2c070"/><stop offset="0.55" stop-color="#fbe6c4"/><stop offset="1" stop-color="#ffffff"/></linearGradient>
<path d="M358.2,29.6 C357.0,28.4 358.2,27.2 359.4,28.2 L360.6,29.4 L360.2,26.0 C360.1,24.8 361.7,24.6 361.9,25.8 L362.1,24.8 C362.3,23.6 363.9,23.7 363.9,24.9 L364.1,25.1 C364.5,24.1 365.9,24.4 365.8,25.6 L366.0,26.6 C366.6,25.8 367.5,26.4 367.3,27.4 L366.7,32.0 C366.5,33.8 365.5,34.8 363.7,34.8 L362.4,34.8 C361.0,34.8 360.2,34.0 359.5,32.6 Z" fill="url(#hg)" stroke="#dc962c" stroke-width="1.0" stroke-linejoin="round"/>
<path d="M361.9,25.8 L362.2,29 M363.9,25 L363.9,29 M365.8,25.8 L365.6,29.2" stroke="#e4a040" stroke-width="0.6" fill="none"/>
<path d="M375.6,34.6 L376.6,31.2 L383.6,23.8 L386.4,26.2 L379.2,33.6 Z" fill="#fbd08c" stroke="#e8982c" stroke-width="1.0" stroke-linejoin="round"/>
<path d="M378.2,31.6 L384.6,25.0" stroke="#fff4dc" stroke-width="1.0" fill="none" stroke-linecap="round"/>
<path d="M375.4,34.8 L376.1,32.6 L377.8,34.0 Z" fill="#7a5020"/>
<path d="M393.8,34.4 L394.8,31.6 L402.4,24.0 L405.0,26.6 L397.6,34.0 Z" fill="#86b0f0" stroke="#3874d8" stroke-width="1.0" stroke-linejoin="round"/>
<path d="M397.0,31.6 L403.2,25.4" stroke="#e4eeff" stroke-width="1.0" fill="none" stroke-linecap="round"/>
<path d="M400.0,31.4 L403.2,29.4 L404.8,32.6 L401.6,34.6 Z" fill="#1c3c88"/>
<path d="M393.6,34.6 L394.4,32.6 L396.0,34.0 Z" fill="#2858b8"/>
<rect x="417.80" y="23.90" width="11.20" height="10.80" fill="#e4e6ea"/>
<line x1="418.60" y1="24.20" x2="418.60" y2="34.40" stroke="#707070" stroke-width="0.9"/>
<line x1="418.20" y1="34.30" x2="429.00" y2="34.30" stroke="#707070" stroke-width="0.9"/>
<rect x="419.40" y="29.80" width="1.70" height="4.20" fill="#1880f0"/>
<rect x="421.80" y="25.40" width="1.70" height="8.60" fill="#1880f0"/>
<rect x="424.20" y="26.90" width="1.70" height="7.10" fill="#1880f0"/>
<rect x="426.60" y="30.20" width="1.70" height="3.80" fill="#1880f0"/>
<rect x="440.70" y="23.90" width="10.40" height="10.80" fill="#dcdfe6"/>
<line x1="441.30" y1="24.20" x2="441.30" y2="34.40" stroke="#707070" stroke-width="0.9"/>
<line x1="440.90" y1="34.30" x2="451.00" y2="34.30" stroke="#707070" stroke-width="0.9"/>
<rect x="442.20" y="29.80" width="1.70" height="4.20" fill="#1880f0"/>
<rect x="444.40" y="25.60" width="1.70" height="8.40" fill="#1880f0"/>
<rect x="446.60" y="27.00" width="1.70" height="7.00" fill="#1880f0"/>
<rect x="448.80" y="30.20" width="1.70" height="3.80" fill="#1880f0"/>
<path d="M442,25.6 L450.4,33.4 M450.4,25.6 L442,33.4" stroke="#f02828" stroke-width="1.2" fill="none"/>
<path d="M469.6,25.8 A4.6,4.6 0 1 0 472.6,33.4" fill="none" stroke="#2088e0" stroke-width="1.9"/><path d="M466.4,23.6 L471.4,23.8 L470.4,28.2 Z" fill="#2088e0"/>
<text x="469.70" y="31.90" font-family="'Liberation Sans','IPAGothic',sans-serif" font-size="8.4" fill="#2078d8" textLength="4.80" lengthAdjust="spacingAndGlyphs" font-weight="bold" stroke="#2078d8" stroke-width="0.3">R</text>
<path d="M1001.7,33.8 L1006.3,30.3" stroke="#5644f0" stroke-width="2.5" stroke-linecap="round" fill="none"/>
<circle cx="1008.7" cy="27.6" r="1.7" fill="#e8e4ff"/>
<path d="M1011.37,27.22 A2.7,2.7 0 1 1 1009.80,25.13" fill="none" stroke="#9a8af2" stroke-width="1.7" stroke-linecap="butt"/>
<path d="M1009.00,27.40 L1012.87,28.06 L1009.41,23.46 Z" fill="#cdd1da"/>
<rect x="1018.90" y="21.80" width="0.90" height="16.00" fill="#aeb0b4"/>
</svg>
</body></html>
